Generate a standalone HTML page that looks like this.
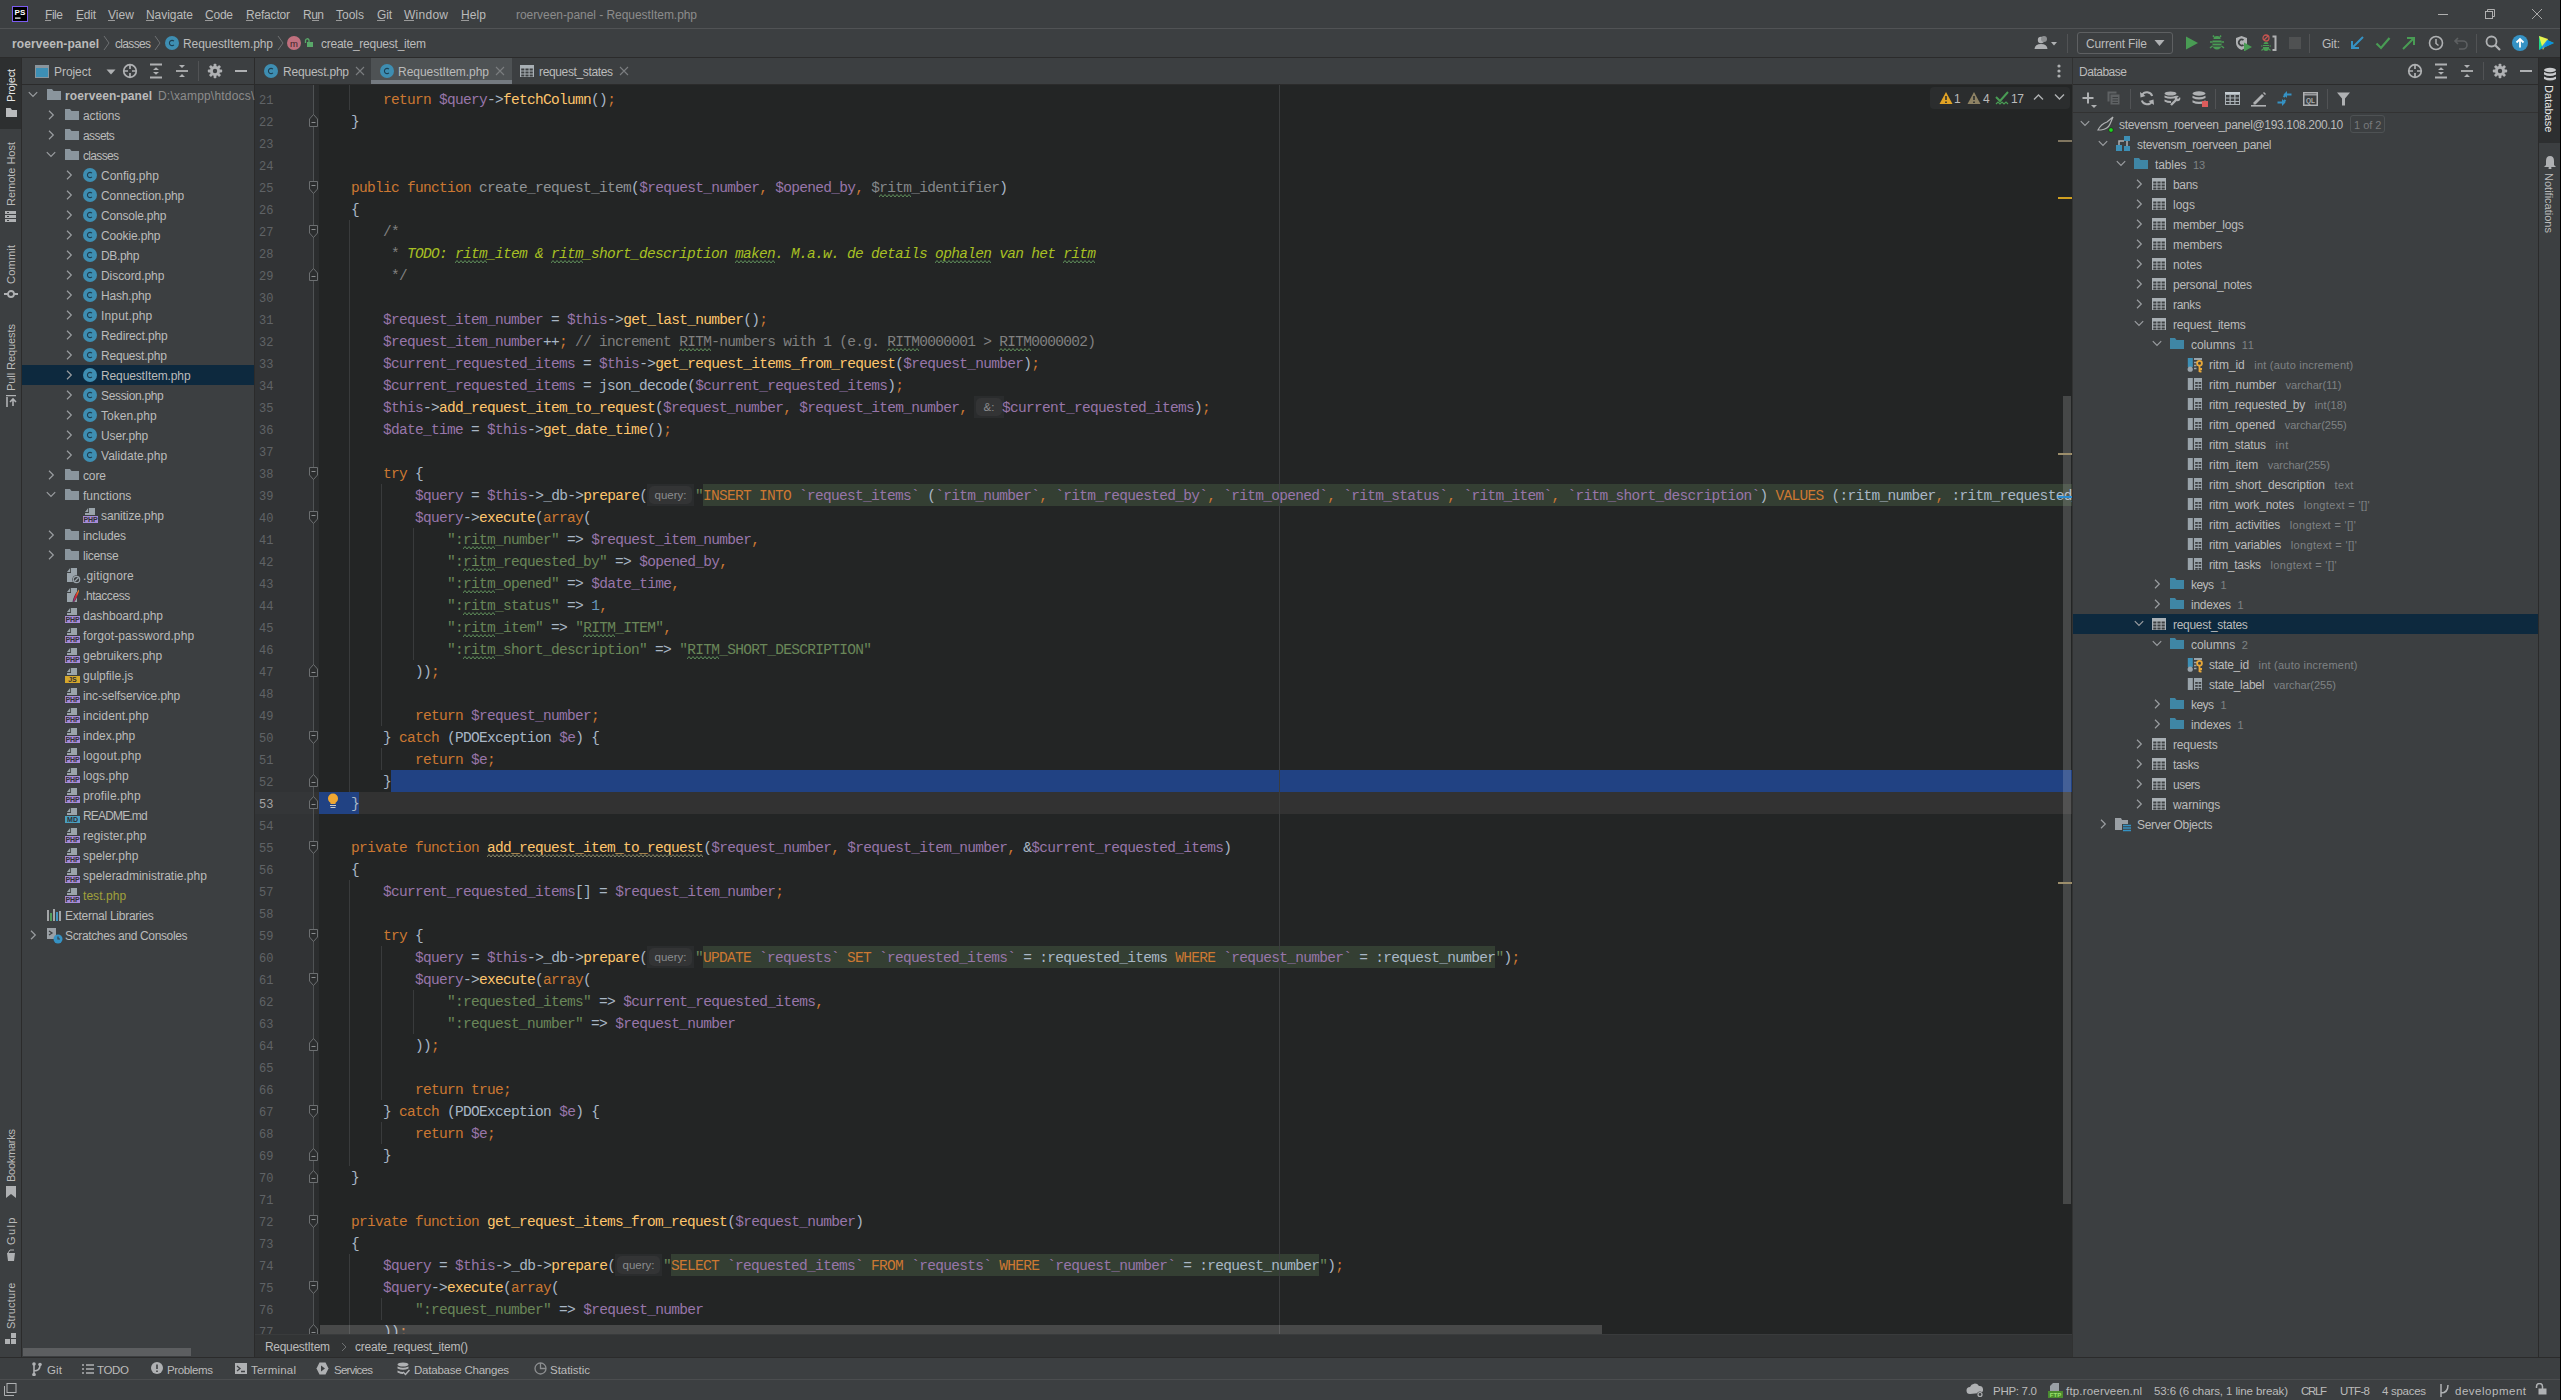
<!DOCTYPE html><html><head><meta charset="utf-8"><style>*{margin:0;padding:0}
html,body{width:2561px;height:1400px;overflow:hidden;background:#3c3f41}
.a{position:absolute;display:block}
.t{font-family:"Liberation Sans",sans-serif;white-space:nowrap}
.m{font-family:"Liberation Mono",monospace;font-size:14.5px;letter-spacing:-0.7px;white-space:pre}
</style></head><body><div class="a" style="left:0px;top:0px;width:2561px;height:28px;background:#3c3f41;"></div>
<div class="a" style="left:0px;top:28px;width:2561px;height:1px;background:#515355;"></div>
<svg class="a" style="left:12px;top:6px;" width="16" height="16" viewBox="0 0 16 16"><rect x="0.5" y="0.5" width="15" height="15" fill="#000" stroke="#7b5cf0" stroke-width="1"/><text x="2.6" y="9" font-size="8" font-family="Liberation Sans" font-weight="bold" fill="#fff">PS</text><rect x="3" y="11.5" width="5.5" height="1.2" fill="#fff"/></svg>
<div class="a t" style="left:45px;top:1px;height:28px;line-height:28px;color:#bbbbbb;font-size:12px;letter-spacing:-0.448px;">File</div>
<div class="a t" style="left:76px;top:1px;height:28px;line-height:28px;color:#bbbbbb;font-size:12px;letter-spacing:-0.224px;">Edit</div>
<div class="a t" style="left:108px;top:1px;height:28px;line-height:28px;color:#bbbbbb;font-size:12px;letter-spacing:0.068px;">View</div>
<div class="a t" style="left:146px;top:1px;height:28px;line-height:28px;color:#bbbbbb;font-size:12px;letter-spacing:-0.051px;">Navigate</div>
<div class="a t" style="left:205px;top:1px;height:28px;line-height:28px;color:#bbbbbb;font-size:12px;letter-spacing:-0.229px;">Code</div>
<div class="a t" style="left:246px;top:1px;height:28px;line-height:28px;color:#bbbbbb;font-size:12px;letter-spacing:-0.192px;">Refactor</div>
<div class="a t" style="left:303px;top:1px;height:28px;line-height:28px;color:#bbbbbb;font-size:12px;letter-spacing:-0.508px;">Run</div>
<div class="a t" style="left:336px;top:1px;height:28px;line-height:28px;color:#bbbbbb;font-size:12px;letter-spacing:-0.004px;">Tools</div>
<div class="a t" style="left:377px;top:1px;height:28px;line-height:28px;color:#bbbbbb;font-size:12px;letter-spacing:-0.164px;">Git</div>
<div class="a t" style="left:404px;top:1px;height:28px;line-height:28px;color:#bbbbbb;font-size:12px;letter-spacing:0.263px;">Window</div>
<div class="a t" style="left:461px;top:1px;height:28px;line-height:28px;color:#bbbbbb;font-size:12px;letter-spacing:0.104px;">Help</div>
<div class="a" style="left:45px;top:20px;width:6px;height:1px;background:#9a9a9a;"></div>
<div class="a" style="left:76px;top:20px;width:6px;height:1px;background:#9a9a9a;"></div>
<div class="a" style="left:108px;top:20px;width:7px;height:1px;background:#9a9a9a;"></div>
<div class="a" style="left:146px;top:20px;width:8px;height:1px;background:#9a9a9a;"></div>
<div class="a" style="left:205px;top:20px;width:8px;height:1px;background:#9a9a9a;"></div>
<div class="a" style="left:246px;top:20px;width:7px;height:1px;background:#9a9a9a;"></div>
<div class="a" style="left:312px;top:20px;width:7px;height:1px;background:#9a9a9a;"></div>
<div class="a" style="left:336px;top:20px;width:6px;height:1px;background:#9a9a9a;"></div>
<div class="a" style="left:377px;top:20px;width:8px;height:1px;background:#9a9a9a;"></div>
<div class="a" style="left:404px;top:20px;width:10px;height:1px;background:#9a9a9a;"></div>
<div class="a" style="left:461px;top:20px;width:8px;height:1px;background:#9a9a9a;"></div>
<div class="a t" style="left:516px;top:1px;height:28px;line-height:28px;color:#8c8c8c;font-size:12px;letter-spacing:-0.056px;">roerveen-panel - RequestItem.php</div>
<div class="a" style="left:2438px;top:14px;width:10px;height:1px;background:#b0b0b0;"></div>
<svg class="a" style="left:2485px;top:9px;" width="11" height="11" viewBox="0 0 11 11"><rect x="0.5" y="2.5" width="7" height="7" fill="none" stroke="#b0b0b0"/><path d="M2.5 2.5 V0.5 H9.5 V7.5 H7.5" fill="none" stroke="#b0b0b0"/></svg>
<svg class="a" style="left:2531px;top:8px;" width="12" height="12" viewBox="0 0 12 12"><path d="M1 1 L11 11 M11 1 L1 11" stroke="#a8a8a8" stroke-width="1"/></svg>
<div class="a" style="left:0px;top:29px;width:2561px;height:28px;background:#3c3f41;"></div>
<div class="a" style="left:0px;top:57px;width:2561px;height:1px;background:#2b2b2b;"></div>
<div class="a t" style="left:12px;top:30px;height:28px;line-height:28px;color:#bbbbbb;font-size:12px;font-weight:bold;letter-spacing:0.076px;">roerveen-panel</div>
<svg class="a" style="left:103px;top:33px;" width="7" height="20" viewBox="0 0 7 20"><path d="M1 3 L6 10 L1 17" fill="none" stroke="#6e7072" stroke-width="1"/></svg>
<div class="a t" style="left:115px;top:30px;height:28px;line-height:28px;color:#bbbbbb;font-size:12px;letter-spacing:-0.669px;">classes</div>
<svg class="a" style="left:154px;top:33px;" width="7" height="20" viewBox="0 0 7 20"><path d="M1 3 L6 10 L1 17" fill="none" stroke="#6e7072" stroke-width="1"/></svg>
<svg class="a" style="left:164px;top:35px;" width="16" height="16" viewBox="0 0 16 16"><circle cx="8" cy="8" r="7" fill="#3e8eb2"/><path d="M9.9 6.2 A2.6 2.6 0 1 0 9.9 9.8" fill="none" stroke="#1d3f52" stroke-width="1.1"/></svg>
<div class="a t" style="left:183px;top:30px;height:28px;line-height:28px;color:#bbbbbb;font-size:12px;letter-spacing:-0.097px;">RequestItem.php</div>
<svg class="a" style="left:277px;top:33px;" width="7" height="20" viewBox="0 0 7 20"><path d="M1 3 L6 10 L1 17" fill="none" stroke="#6e7072" stroke-width="1"/></svg>
<svg class="a" style="left:286px;top:35px;" width="16" height="16" viewBox="0 0 16 16"><circle cx="8" cy="8" r="7" fill="#c0707e"/><text x="8" y="11.5" font-size="9.5" font-family="Liberation Sans" fill="#3a2328" text-anchor="middle">m</text></svg>
<svg class="a" style="left:304px;top:38px;" width="10" height="10" viewBox="0 0 10 10"><rect x="3" y="4" width="6" height="5" fill="#59a869"/><path d="M1.5 5 V2.5 A1.8 1.8 0 0 1 5 2 V4" fill="none" stroke="#59a869" stroke-width="1.3"/></svg>
<div class="a t" style="left:321px;top:30px;height:28px;line-height:28px;color:#bbbbbb;font-size:12px;letter-spacing:-0.243px;">create_request_item</div>
<svg class="a" style="left:2033px;top:35px;" width="26" height="16" viewBox="0 0 26 16"><circle cx="8" cy="5" r="3.2" fill="#afb1b3"/><path d="M1.5 14 Q2 9 8 9 Q14 9 14.5 14 Z" fill="#afb1b3"/><circle cx="11" cy="4" r="3" fill="#8c8e90"/><path d="M18 7 L21 10.5 L24 7 Z" fill="#afb1b3"/></svg>
<div class="a" style="left:2067px;top:34px;width:1px;height:19px;background:#515355;"></div>
<div class="a" style="left:2077px;top:32px;width:96px;height:22px;background:none;border:1px solid #5e6062;border-radius:3px;box-sizing:border-box;"></div>
<div class="a t" style="left:2086px;top:30px;height:28px;line-height:28px;color:#bbbbbb;font-size:12px;letter-spacing:-0.153px;">Current File</div>
<svg class="a" style="left:2154px;top:39px;" width="11" height="8" viewBox="0 0 11 8"><path d="M0.5 1 H10.5 L5.5 7 Z" fill="#afb1b3"/></svg>
<svg class="a" style="left:2184px;top:35px;" width="15" height="16" viewBox="0 0 15 16"><path d="M2 1.5 L14 8 L2 14.5 Z" fill="#499c54"/></svg>
<svg class="a" style="left:2209px;top:35px;" width="16" height="16" viewBox="0 0 16 16"><path d="M4.5 4 A3.5 3 0 0 1 11.5 4 Z" fill="#499c54"/><path d="M3.5 5.5 H12.5 V10 A4.5 4.5 0 0 1 3.5 10 Z" fill="#499c54"/><path d="M3.5 8 H12.5" stroke="#3c3f41" stroke-width="1.2"/><path d="M3.5 11 H12.5" stroke="#3c3f41" stroke-width="1.2"/><path d="M5 2 L4 0.5 M11 2 L12 0.5 M3.5 7 H1 M12.5 7 H15 M3.5 11 L1 13 M12.5 11 L15 13" stroke="#499c54" stroke-width="1.5"/></svg>
<svg class="a" style="left:2235px;top:35px;" width="18" height="16" viewBox="0 0 18 16"><path d="M1 3 L6.5 1 L12 3 V8 Q12 12.5 6.5 15 Q1 12.5 1 8 Z" fill="#afb1b3"/><path d="M8.5 5 A3 3 0 1 0 8.5 10" fill="none" stroke="#3c3f41" stroke-width="1.8"/><path d="M9 7.5 L17 12 L9 16.5 Z" fill="#499c54"/></svg>
<svg class="a" style="left:2261px;top:34px;" width="18" height="18" viewBox="0 0 18 18"><circle cx="5" cy="4" r="3" fill="none" stroke="#c75450" stroke-width="1.3"/><path d="M3 6 L7 2" stroke="#c75450" stroke-width="1.2"/><path d="M2.5 10 A2.5 2 0 0 1 7.5 10 Z" fill="#499c54"/><path d="M2 11 H8 V14 A3 3 0 0 1 2 14 Z" fill="#499c54"/><path d="M2 12.5 H8" stroke="#3c3f41"/><path d="M1.5 12 H0 M8.5 12 H10 M2 15 L0.5 16.5 M8 15 L9.5 16.5" stroke="#499c54" stroke-width="1.1"/><path d="M11.5 2.5 H14.5 V16 H11.5" fill="none" stroke="#afb1b3" stroke-width="2"/></svg>
<div class="a" style="left:2289px;top:37px;width:12px;height:12px;background:#4f5152;"></div>
<div class="a" style="left:2309px;top:34px;width:1px;height:19px;background:#515355;"></div>
<div class="a t" style="left:2322px;top:30px;height:28px;line-height:28px;color:#bbbbbb;font-size:12px;letter-spacing:-0.219px;">Git:</div>
<svg class="a" style="left:2349px;top:35px;" width="16" height="16" viewBox="0 0 16 16"><path d="M14 2 L3 13 M3 6 V13 H10" fill="none" stroke="#3592c4" stroke-width="2"/></svg>
<svg class="a" style="left:2375px;top:35px;" width="16" height="16" viewBox="0 0 16 16"><path d="M1.5 8.5 L6 13 L14.5 3" fill="none" stroke="#499c54" stroke-width="2.2"/></svg>
<svg class="a" style="left:2401px;top:35px;" width="16" height="16" viewBox="0 0 16 16"><path d="M2 14 L13 3 M6 3 H13 V10" fill="none" stroke="#499c54" stroke-width="2"/></svg>
<svg class="a" style="left:2428px;top:35px;" width="16" height="16" viewBox="0 0 16 16"><circle cx="8" cy="8" r="6.5" fill="none" stroke="#afb1b3" stroke-width="1.6"/><path d="M8 4 V8.5 L10.5 10.5" fill="none" stroke="#afb1b3" stroke-width="1.5"/></svg>
<svg class="a" style="left:2453px;top:35px;" width="16" height="16" viewBox="0 0 16 16"><path d="M5 3 L2 6 L5 9 M2 6 H10 A4 4 0 0 1 10 14 H6" fill="none" stroke="#5d6062" stroke-width="1.6"/></svg>
<div class="a" style="left:2476px;top:34px;width:1px;height:19px;background:#515355;"></div>
<svg class="a" style="left:2485px;top:35px;" width="16" height="16" viewBox="0 0 16 16"><circle cx="6.5" cy="6.5" r="5" fill="none" stroke="#afb1b3" stroke-width="1.8"/><path d="M10 10 L15 15" stroke="#afb1b3" stroke-width="2.2"/></svg>
<svg class="a" style="left:2512px;top:35px;" width="16" height="16" viewBox="0 0 16 16"><circle cx="8" cy="8" r="8" fill="#3592c4"/><path d="M8 12.5 V4 M4.5 7.5 L8 4 L11.5 7.5" fill="none" stroke="#fff" stroke-width="1.8"/></svg>
<svg class="a" style="left:2538px;top:34px;" width="18" height="18" viewBox="0 0 18 18"><path d="M1 2 L16 9 L1 16 Z" fill="#21d789"/><path d="M1 2 L10 5 L5 16 Z" fill="#fcf84a" opacity="0.9"/><path d="M1 16 L16 9 L9 6 Z" fill="#087cfa" opacity="0.8"/></svg>
<div class="a" style="left:0px;top:58px;width:21px;height:1299px;background:#3c3f41;"></div>
<div class="a" style="left:21px;top:58px;width:1px;height:1299px;background:#2b2b2b;"></div>
<div class="a" style="left:0px;top:58px;width:21px;height:71px;background:#2d2f30;"></div>
<div class="a t" style="left:3px;top:101.5px;width:36.5px;height:16px;line-height:16px;color:#e6e6e6;font-size:11px;transform-origin:0 0;transform:rotate(-90deg);letter-spacing:-0.208px">Project</div>
<svg class="a" style="left:6px;top:108px;" width="12" height="10" viewBox="0 0 12 10"><path d="M0 0 H4.5 L6 2 H11 V9 H0 Z" fill="#b9bbbd"/></svg>
<div class="a t" style="left:3px;top:205.5px;width:67.5px;height:16px;line-height:16px;color:#bbbbbb;font-size:11px;transform-origin:0 0;transform:rotate(-90deg);letter-spacing:-0.022px">Remote Host</div>
<svg class="a" style="left:5px;top:211px;" width="12" height="11" viewBox="0 0 12 11"><rect x="0" y="0" width="11" height="3" fill="#afb1b3"/><rect x="0" y="4" width="11" height="3" fill="#afb1b3"/><rect x="0" y="8" width="11" height="3" fill="#afb1b3"/><path d="M2 1.5 H4 M2 5.5 H4 M2 9.5 H4" stroke="#3c3f41"/></svg>
<div class="a t" style="left:3px;top:283.5px;width:42.5px;height:16px;line-height:16px;color:#bbbbbb;font-size:11px;transform-origin:0 0;transform:rotate(-90deg);letter-spacing:0.225px">Commit</div>
<svg class="a" style="left:4px;top:289px;" width="14" height="10" viewBox="0 0 14 10"><circle cx="7" cy="5" r="3" fill="none" stroke="#afb1b3" stroke-width="1.8"/><path d="M0 5 H4 M10 5 H14" stroke="#afb1b3" stroke-width="1.8"/></svg>
<div class="a t" style="left:3px;top:390.5px;width:70.5px;height:16px;line-height:16px;color:#bbbbbb;font-size:11px;transform-origin:0 0;transform:rotate(-90deg);letter-spacing:-0.076px">Pull Requests</div>
<svg class="a" style="left:5px;top:395px;" width="12" height="12" viewBox="0 0 12 12"><path d="M1 0.5 H11 M2 12 V2 M8 11 V4 M5 7 L8 4 L11 7" fill="none" stroke="#afb1b3" stroke-width="1.6"/></svg>
<div class="a t" style="left:3px;top:1182.0px;width:56.5px;height:16px;line-height:16px;color:#bbbbbb;font-size:11px;transform-origin:0 0;transform:rotate(-90deg);letter-spacing:-0.254px">Bookmarks</div>
<svg class="a" style="left:6px;top:1186px;" width="10" height="12" viewBox="0 0 10 12"><path d="M0 0 H10 V12 L5 8 L0 12 Z" fill="#afb1b3"/></svg>
<div class="a t" style="left:3px;top:1244.5px;width:31px;height:16px;line-height:16px;color:#bbbbbb;font-size:11px;transform-origin:0 0;transform:rotate(-90deg);letter-spacing:1.417px">Gulp</div>
<svg class="a" style="left:6px;top:1249px;" width="10" height="12" viewBox="0 0 10 12"><path d="M1 4 H9 L8 12 H2 Z" fill="#afb1b3"/><path d="M2 4 L4 1 H8" fill="none" stroke="#afb1b3"/></svg>
<div class="a t" style="left:3px;top:1329.0px;width:50.0px;height:16px;line-height:16px;color:#bbbbbb;font-size:11px;transform-origin:0 0;transform:rotate(-90deg);letter-spacing:0.230px">Structure</div>
<svg class="a" style="left:5px;top:1333px;" width="12" height="12" viewBox="0 0 12 12"><rect x="6" y="0" width="5" height="5" fill="#afb1b3"/><rect x="0" y="6" width="5" height="5" fill="#afb1b3"/><rect x="6" y="6" width="5" height="5" fill="#afb1b3"/></svg>
<div class="a" style="left:22px;top:58px;width:232px;height:1299px;background:#3c3f41;"></div>
<div class="a" style="left:22px;top:84px;width:232px;height:1px;background:#2b2b2b;"></div>
<div class="a" style="left:254px;top:58px;width:1px;height:1299px;background:#2b2b2b;"></div>
<svg class="a" style="left:35px;top:65px;" width="14" height="13" viewBox="0 0 14 13"><rect x="0" y="0" width="14" height="13" fill="#8a959d"/><rect x="1" y="3" width="12" height="9" fill="#3d8fb5"/></svg>
<div class="a t" style="left:54px;top:59px;height:26px;line-height:26px;color:#bbbbbb;font-size:12px;letter-spacing:-0.057px;">Project</div>
<svg class="a" style="left:106px;top:69px;" width="10" height="6" viewBox="0 0 10 6"><path d="M0.5 0.5 H9.5 L5 5.5 Z" fill="#afb1b3"/></svg>
<svg class="a" style="left:122px;top:63px;" width="16" height="16" viewBox="0 0 16 16"><circle cx="8" cy="8" r="6.3" fill="none" stroke="#afb1b3" stroke-width="1.7"/><path d="M8 1.5 V6 M8 10 V14.5 M1.5 8 H6 M10 8 H14.5" stroke="#afb1b3" stroke-width="1.7"/></svg>
<svg class="a" style="left:148px;top:63px;" width="16" height="16" viewBox="0 0 16 16"><path d="M2 1.5 H14 M2 14.5 H14" stroke="#afb1b3" stroke-width="1.8"/><path d="M5 7 L8 4.2 L11 7 Z M5 9 L8 11.8 L11 9 Z" fill="#afb1b3"/></svg>
<svg class="a" style="left:174px;top:63px;" width="16" height="16" viewBox="0 0 16 16"><path d="M2 8 H14" stroke="#afb1b3" stroke-width="1.8"/><path d="M5 2 L8 5 L11 2 Z M5 14 L8 11 L11 14 Z" fill="#afb1b3"/></svg>
<div class="a" style="left:198px;top:61px;width:1px;height:20px;background:#515355;"></div>
<svg class="a" style="left:207px;top:63px;" width="16" height="16" viewBox="0 0 16 16"><g fill="#afb1b3"><circle cx="8" cy="8" r="5"/><rect x="6.6" y="0.8" width="2.8" height="14.4" rx="0.8" transform="rotate(0 8 8)"/><rect x="6.6" y="0.8" width="2.8" height="14.4" rx="0.8" transform="rotate(45 8 8)"/><rect x="6.6" y="0.8" width="2.8" height="14.4" rx="0.8" transform="rotate(90 8 8)"/><rect x="6.6" y="0.8" width="2.8" height="14.4" rx="0.8" transform="rotate(135 8 8)"/></g><circle cx="8" cy="8" r="2.2" fill="#3c3f41"/></svg>
<div class="a" style="left:235px;top:70px;width:12px;height:2px;background:#afb1b3;"></div>
<svg class="a" style="left:28px;top:90px;" width="10" height="10" viewBox="0 0 10 10"><path d="M0.8 2.2 L5 6.5 L9.2 2.2" fill="none" stroke="#9a9da0" stroke-width="1.2"/></svg>
<svg class="a" style="left:46px;top:86px;" width="16" height="16" viewBox="0 0 16 16"><path d="M1 3 H6 L7.5 5 H15 V14 H1 Z" fill="#8a959d"/></svg>
<div class="a t" style="left:65px;top:86px;height:20px;line-height:20px;color:#bbbbbb;font-size:12px;font-weight:bold;letter-spacing:0.076px;">roerveen-panel</div>
<div class="a t" style="left:158px;top:86px;height:20px;line-height:20px;color:#8c8c8c;font-size:12px;letter-spacing:0.190px;">D:\xampp\htdocs\</div>
<svg class="a" style="left:46px;top:110px;" width="10" height="10" viewBox="0 0 10 10"><path d="M3 0.8 L7.3 5 L3 9.2" fill="none" stroke="#9a9da0" stroke-width="1.2"/></svg>
<svg class="a" style="left:64px;top:106px;" width="16" height="16" viewBox="0 0 16 16"><path d="M1 3 H6 L7.5 5 H15 V14 H1 Z" fill="#8a959d"/></svg>
<div class="a t" style="left:83px;top:106px;height:20px;line-height:20px;color:#bbbbbb;font-size:12px;letter-spacing:-0.118px;">actions</div>
<svg class="a" style="left:46px;top:130px;" width="10" height="10" viewBox="0 0 10 10"><path d="M3 0.8 L7.3 5 L3 9.2" fill="none" stroke="#9a9da0" stroke-width="1.2"/></svg>
<svg class="a" style="left:64px;top:126px;" width="16" height="16" viewBox="0 0 16 16"><path d="M1 3 H6 L7.5 5 H15 V14 H1 Z" fill="#8a959d"/></svg>
<div class="a t" style="left:83px;top:126px;height:20px;line-height:20px;color:#bbbbbb;font-size:12px;letter-spacing:-0.596px;">assets</div>
<svg class="a" style="left:46px;top:150px;" width="10" height="10" viewBox="0 0 10 10"><path d="M0.8 2.2 L5 6.5 L9.2 2.2" fill="none" stroke="#9a9da0" stroke-width="1.2"/></svg>
<svg class="a" style="left:64px;top:146px;" width="16" height="16" viewBox="0 0 16 16"><path d="M1 3 H6 L7.5 5 H15 V14 H1 Z" fill="#8a959d"/></svg>
<div class="a t" style="left:83px;top:146px;height:20px;line-height:20px;color:#bbbbbb;font-size:12px;letter-spacing:-0.657px;">classes</div>
<svg class="a" style="left:64px;top:170px;" width="10" height="10" viewBox="0 0 10 10"><path d="M3 0.8 L7.3 5 L3 9.2" fill="none" stroke="#9a9da0" stroke-width="1.2"/></svg>
<svg class="a" style="left:82px;top:167px;" width="16" height="16" viewBox="0 0 16 16"><circle cx="8" cy="8" r="7" fill="#3e8eb2"/><path d="M9.9 6.2 A2.6 2.6 0 1 0 9.9 9.8" fill="none" stroke="#1d3f52" stroke-width="1.1"/></svg>
<div class="a t" style="left:101px;top:166px;height:20px;line-height:20px;color:#bbbbbb;font-size:12px;letter-spacing:-0.022px;">Config.php</div>
<svg class="a" style="left:64px;top:190px;" width="10" height="10" viewBox="0 0 10 10"><path d="M3 0.8 L7.3 5 L3 9.2" fill="none" stroke="#9a9da0" stroke-width="1.2"/></svg>
<svg class="a" style="left:82px;top:187px;" width="16" height="16" viewBox="0 0 16 16"><circle cx="8" cy="8" r="7" fill="#3e8eb2"/><path d="M9.9 6.2 A2.6 2.6 0 1 0 9.9 9.8" fill="none" stroke="#1d3f52" stroke-width="1.1"/></svg>
<div class="a t" style="left:101px;top:186px;height:20px;line-height:20px;color:#bbbbbb;font-size:12px;letter-spacing:-0.059px;">Connection.php</div>
<svg class="a" style="left:64px;top:210px;" width="10" height="10" viewBox="0 0 10 10"><path d="M3 0.8 L7.3 5 L3 9.2" fill="none" stroke="#9a9da0" stroke-width="1.2"/></svg>
<svg class="a" style="left:82px;top:207px;" width="16" height="16" viewBox="0 0 16 16"><circle cx="8" cy="8" r="7" fill="#3e8eb2"/><path d="M9.9 6.2 A2.6 2.6 0 1 0 9.9 9.8" fill="none" stroke="#1d3f52" stroke-width="1.1"/></svg>
<div class="a t" style="left:101px;top:206px;height:20px;line-height:20px;color:#bbbbbb;font-size:12px;letter-spacing:-0.199px;">Console.php</div>
<svg class="a" style="left:64px;top:230px;" width="10" height="10" viewBox="0 0 10 10"><path d="M3 0.8 L7.3 5 L3 9.2" fill="none" stroke="#9a9da0" stroke-width="1.2"/></svg>
<svg class="a" style="left:82px;top:227px;" width="16" height="16" viewBox="0 0 16 16"><circle cx="8" cy="8" r="7" fill="#3e8eb2"/><path d="M9.9 6.2 A2.6 2.6 0 1 0 9.9 9.8" fill="none" stroke="#1d3f52" stroke-width="1.1"/></svg>
<div class="a t" style="left:101px;top:226px;height:20px;line-height:20px;color:#bbbbbb;font-size:12px;letter-spacing:-0.136px;">Cookie.php</div>
<svg class="a" style="left:64px;top:250px;" width="10" height="10" viewBox="0 0 10 10"><path d="M3 0.8 L7.3 5 L3 9.2" fill="none" stroke="#9a9da0" stroke-width="1.2"/></svg>
<svg class="a" style="left:82px;top:247px;" width="16" height="16" viewBox="0 0 16 16"><circle cx="8" cy="8" r="7" fill="#3e8eb2"/><path d="M9.9 6.2 A2.6 2.6 0 1 0 9.9 9.8" fill="none" stroke="#1d3f52" stroke-width="1.1"/></svg>
<div class="a t" style="left:101px;top:246px;height:20px;line-height:20px;color:#bbbbbb;font-size:12px;letter-spacing:-0.330px;">DB.php</div>
<svg class="a" style="left:64px;top:270px;" width="10" height="10" viewBox="0 0 10 10"><path d="M3 0.8 L7.3 5 L3 9.2" fill="none" stroke="#9a9da0" stroke-width="1.2"/></svg>
<svg class="a" style="left:82px;top:267px;" width="16" height="16" viewBox="0 0 16 16"><circle cx="8" cy="8" r="7" fill="#3e8eb2"/><path d="M9.9 6.2 A2.6 2.6 0 1 0 9.9 9.8" fill="none" stroke="#1d3f52" stroke-width="1.1"/></svg>
<div class="a t" style="left:101px;top:266px;height:20px;line-height:20px;color:#bbbbbb;font-size:12px;letter-spacing:-0.064px;">Discord.php</div>
<svg class="a" style="left:64px;top:290px;" width="10" height="10" viewBox="0 0 10 10"><path d="M3 0.8 L7.3 5 L3 9.2" fill="none" stroke="#9a9da0" stroke-width="1.2"/></svg>
<svg class="a" style="left:82px;top:287px;" width="16" height="16" viewBox="0 0 16 16"><circle cx="8" cy="8" r="7" fill="#3e8eb2"/><path d="M9.9 6.2 A2.6 2.6 0 1 0 9.9 9.8" fill="none" stroke="#1d3f52" stroke-width="1.1"/></svg>
<div class="a t" style="left:101px;top:286px;height:20px;line-height:20px;color:#bbbbbb;font-size:12px;letter-spacing:-0.181px;">Hash.php</div>
<svg class="a" style="left:64px;top:310px;" width="10" height="10" viewBox="0 0 10 10"><path d="M3 0.8 L7.3 5 L3 9.2" fill="none" stroke="#9a9da0" stroke-width="1.2"/></svg>
<svg class="a" style="left:82px;top:307px;" width="16" height="16" viewBox="0 0 16 16"><circle cx="8" cy="8" r="7" fill="#3e8eb2"/><path d="M9.9 6.2 A2.6 2.6 0 1 0 9.9 9.8" fill="none" stroke="#1d3f52" stroke-width="1.1"/></svg>
<div class="a t" style="left:101px;top:306px;height:20px;line-height:20px;color:#bbbbbb;font-size:12px;letter-spacing:0.151px;">Input.php</div>
<svg class="a" style="left:64px;top:330px;" width="10" height="10" viewBox="0 0 10 10"><path d="M3 0.8 L7.3 5 L3 9.2" fill="none" stroke="#9a9da0" stroke-width="1.2"/></svg>
<svg class="a" style="left:82px;top:327px;" width="16" height="16" viewBox="0 0 16 16"><circle cx="8" cy="8" r="7" fill="#3e8eb2"/><path d="M9.9 6.2 A2.6 2.6 0 1 0 9.9 9.8" fill="none" stroke="#1d3f52" stroke-width="1.1"/></svg>
<div class="a t" style="left:101px;top:326px;height:20px;line-height:20px;color:#bbbbbb;font-size:12px;letter-spacing:-0.125px;">Redirect.php</div>
<svg class="a" style="left:64px;top:350px;" width="10" height="10" viewBox="0 0 10 10"><path d="M3 0.8 L7.3 5 L3 9.2" fill="none" stroke="#9a9da0" stroke-width="1.2"/></svg>
<svg class="a" style="left:82px;top:347px;" width="16" height="16" viewBox="0 0 16 16"><circle cx="8" cy="8" r="7" fill="#3e8eb2"/><path d="M9.9 6.2 A2.6 2.6 0 1 0 9.9 9.8" fill="none" stroke="#1d3f52" stroke-width="1.1"/></svg>
<div class="a t" style="left:101px;top:346px;height:20px;line-height:20px;color:#bbbbbb;font-size:12px;letter-spacing:-0.209px;">Request.php</div>
<div class="a" style="left:22px;top:365px;width:232px;height:20px;background:#0d293e;"></div>
<svg class="a" style="left:64px;top:370px;" width="10" height="10" viewBox="0 0 10 10"><path d="M3 0.8 L7.3 5 L3 9.2" fill="none" stroke="#9a9da0" stroke-width="1.2"/></svg>
<svg class="a" style="left:82px;top:367px;" width="16" height="16" viewBox="0 0 16 16"><circle cx="8" cy="8" r="7" fill="#3e8eb2"/><path d="M9.9 6.2 A2.6 2.6 0 1 0 9.9 9.8" fill="none" stroke="#1d3f52" stroke-width="1.1"/></svg>
<div class="a t" style="left:101px;top:366px;height:20px;line-height:20px;color:#bbbbbb;font-size:12px;letter-spacing:-0.129px;">RequestItem.php</div>
<svg class="a" style="left:64px;top:390px;" width="10" height="10" viewBox="0 0 10 10"><path d="M3 0.8 L7.3 5 L3 9.2" fill="none" stroke="#9a9da0" stroke-width="1.2"/></svg>
<svg class="a" style="left:82px;top:387px;" width="16" height="16" viewBox="0 0 16 16"><circle cx="8" cy="8" r="7" fill="#3e8eb2"/><path d="M9.9 6.2 A2.6 2.6 0 1 0 9.9 9.8" fill="none" stroke="#1d3f52" stroke-width="1.1"/></svg>
<div class="a t" style="left:101px;top:386px;height:20px;line-height:20px;color:#bbbbbb;font-size:12px;letter-spacing:-0.331px;">Session.php</div>
<svg class="a" style="left:64px;top:410px;" width="10" height="10" viewBox="0 0 10 10"><path d="M3 0.8 L7.3 5 L3 9.2" fill="none" stroke="#9a9da0" stroke-width="1.2"/></svg>
<svg class="a" style="left:82px;top:407px;" width="16" height="16" viewBox="0 0 16 16"><circle cx="8" cy="8" r="7" fill="#3e8eb2"/><path d="M9.9 6.2 A2.6 2.6 0 1 0 9.9 9.8" fill="none" stroke="#1d3f52" stroke-width="1.1"/></svg>
<div class="a t" style="left:101px;top:406px;height:20px;line-height:20px;color:#bbbbbb;font-size:12px;letter-spacing:0.040px;">Token.php</div>
<svg class="a" style="left:64px;top:430px;" width="10" height="10" viewBox="0 0 10 10"><path d="M3 0.8 L7.3 5 L3 9.2" fill="none" stroke="#9a9da0" stroke-width="1.2"/></svg>
<svg class="a" style="left:82px;top:427px;" width="16" height="16" viewBox="0 0 16 16"><circle cx="8" cy="8" r="7" fill="#3e8eb2"/><path d="M9.9 6.2 A2.6 2.6 0 1 0 9.9 9.8" fill="none" stroke="#1d3f52" stroke-width="1.1"/></svg>
<div class="a t" style="left:101px;top:426px;height:20px;line-height:20px;color:#bbbbbb;font-size:12px;letter-spacing:-0.116px;">User.php</div>
<svg class="a" style="left:64px;top:450px;" width="10" height="10" viewBox="0 0 10 10"><path d="M3 0.8 L7.3 5 L3 9.2" fill="none" stroke="#9a9da0" stroke-width="1.2"/></svg>
<svg class="a" style="left:82px;top:447px;" width="16" height="16" viewBox="0 0 16 16"><circle cx="8" cy="8" r="7" fill="#3e8eb2"/><path d="M9.9 6.2 A2.6 2.6 0 1 0 9.9 9.8" fill="none" stroke="#1d3f52" stroke-width="1.1"/></svg>
<div class="a t" style="left:101px;top:446px;height:20px;line-height:20px;color:#bbbbbb;font-size:12px;letter-spacing:0.034px;">Validate.php</div>
<svg class="a" style="left:46px;top:470px;" width="10" height="10" viewBox="0 0 10 10"><path d="M3 0.8 L7.3 5 L3 9.2" fill="none" stroke="#9a9da0" stroke-width="1.2"/></svg>
<svg class="a" style="left:64px;top:466px;" width="16" height="16" viewBox="0 0 16 16"><path d="M1 3 H6 L7.5 5 H15 V14 H1 Z" fill="#8a959d"/></svg>
<div class="a t" style="left:83px;top:466px;height:20px;line-height:20px;color:#bbbbbb;font-size:12px;letter-spacing:-0.145px;">core</div>
<svg class="a" style="left:46px;top:490px;" width="10" height="10" viewBox="0 0 10 10"><path d="M0.8 2.2 L5 6.5 L9.2 2.2" fill="none" stroke="#9a9da0" stroke-width="1.2"/></svg>
<svg class="a" style="left:64px;top:486px;" width="16" height="16" viewBox="0 0 16 16"><path d="M1 3 H6 L7.5 5 H15 V14 H1 Z" fill="#8a959d"/></svg>
<div class="a t" style="left:83px;top:486px;height:20px;line-height:20px;color:#bbbbbb;font-size:12px;letter-spacing:0.041px;">functions</div>
<svg class="a" style="left:82px;top:507px;" width="17" height="17" viewBox="0 0 17 17"><path d="M7 1 H13 V8 H3 V6 H7 Z" fill="#9aa4ab"/><path d="M3 5 L6.2 1 V5 Z" fill="#9aa4ab"/><rect x="1" y="9" width="15" height="7" fill="#a58bd6"/><text x="8.5" y="15.3" font-size="7" font-family="Liberation Sans" font-weight="bold" fill="#2f2f33" text-anchor="middle" letter-spacing="-0.2">PHP</text></svg>
<div class="a t" style="left:101px;top:506px;height:20px;line-height:20px;color:#bbbbbb;font-size:12px;letter-spacing:-0.103px;">sanitize.php</div>
<svg class="a" style="left:46px;top:530px;" width="10" height="10" viewBox="0 0 10 10"><path d="M3 0.8 L7.3 5 L3 9.2" fill="none" stroke="#9a9da0" stroke-width="1.2"/></svg>
<svg class="a" style="left:64px;top:526px;" width="16" height="16" viewBox="0 0 16 16"><path d="M1 3 H6 L7.5 5 H15 V14 H1 Z" fill="#8a959d"/></svg>
<div class="a t" style="left:83px;top:526px;height:20px;line-height:20px;color:#bbbbbb;font-size:12px;letter-spacing:-0.131px;">includes</div>
<svg class="a" style="left:46px;top:550px;" width="10" height="10" viewBox="0 0 10 10"><path d="M3 0.8 L7.3 5 L3 9.2" fill="none" stroke="#9a9da0" stroke-width="1.2"/></svg>
<svg class="a" style="left:64px;top:546px;" width="16" height="16" viewBox="0 0 16 16"><path d="M1 3 H6 L7.5 5 H15 V14 H1 Z" fill="#8a959d"/></svg>
<div class="a t" style="left:83px;top:546px;height:20px;line-height:20px;color:#bbbbbb;font-size:12px;letter-spacing:-0.287px;">license</div>
<svg class="a" style="left:64px;top:567px;" width="17" height="17" viewBox="0 0 17 17"><path d="M7 1 H13 V15 H3 V6 H7 Z" fill="#9aa4ab"/><path d="M3 5 L6.2 1 V5 Z" fill="#9aa4ab"/><circle cx="12.5" cy="12.5" r="4.3" fill="#3c3f41"/><circle cx="12.5" cy="12.5" r="3.2" fill="none" stroke="#9aa4ab" stroke-width="1.2"/><path d="M10.5 14.5 L14.5 10.5" stroke="#9aa4ab" stroke-width="1.2"/></svg>
<div class="a t" style="left:83px;top:566px;height:20px;line-height:20px;color:#bbbbbb;font-size:12px;letter-spacing:0.158px;">.gitignore</div>
<svg class="a" style="left:64px;top:587px;" width="17" height="17" viewBox="0 0 17 17"><defs><linearGradient id="fe" x1="1" y1="0" x2="0" y2="1"><stop offset="0" stop-color="#f5a623"/><stop offset="0.5" stop-color="#e0252f"/><stop offset="1" stop-color="#8e2a8e"/></linearGradient></defs><path d="M7 1 H13 V15 H3 V6 H7 Z" fill="#9aa4ab"/><path d="M3 5 L6.2 1 V5 Z" fill="#9aa4ab"/><path d="M15.5 2 Q16 5 11 14 Q9.5 16 8.5 16 Q8.5 12 12 6 Q14 3 15.5 2 Z" fill="#3c3f41"/><path d="M15 2.5 Q15.5 5 10.8 13.5 Q9.8 15.2 9.2 15.2 Q9.3 12 12.3 6.5 Q13.8 3.8 15 2.5 Z" fill="url(#fe)"/></svg>
<div class="a t" style="left:83px;top:586px;height:20px;line-height:20px;color:#bbbbbb;font-size:12px;letter-spacing:-0.429px;">.htaccess</div>
<svg class="a" style="left:64px;top:607px;" width="17" height="17" viewBox="0 0 17 17"><path d="M7 1 H13 V8 H3 V6 H7 Z" fill="#9aa4ab"/><path d="M3 5 L6.2 1 V5 Z" fill="#9aa4ab"/><rect x="1" y="9" width="15" height="7" fill="#a58bd6"/><text x="8.5" y="15.3" font-size="7" font-family="Liberation Sans" font-weight="bold" fill="#2f2f33" text-anchor="middle" letter-spacing="-0.2">PHP</text></svg>
<div class="a t" style="left:83px;top:606px;height:20px;line-height:20px;color:#bbbbbb;font-size:12px;letter-spacing:-0.004px;">dashboard.php</div>
<svg class="a" style="left:64px;top:627px;" width="17" height="17" viewBox="0 0 17 17"><path d="M7 1 H13 V8 H3 V6 H7 Z" fill="#9aa4ab"/><path d="M3 5 L6.2 1 V5 Z" fill="#9aa4ab"/><rect x="1" y="9" width="15" height="7" fill="#a58bd6"/><text x="8.5" y="15.3" font-size="7" font-family="Liberation Sans" font-weight="bold" fill="#2f2f33" text-anchor="middle" letter-spacing="-0.2">PHP</text></svg>
<div class="a t" style="left:83px;top:626px;height:20px;line-height:20px;color:#bbbbbb;font-size:12px;letter-spacing:0.093px;">forgot-password.php</div>
<svg class="a" style="left:64px;top:647px;" width="17" height="17" viewBox="0 0 17 17"><path d="M7 1 H13 V8 H3 V6 H7 Z" fill="#9aa4ab"/><path d="M3 5 L6.2 1 V5 Z" fill="#9aa4ab"/><rect x="1" y="9" width="15" height="7" fill="#a58bd6"/><text x="8.5" y="15.3" font-size="7" font-family="Liberation Sans" font-weight="bold" fill="#2f2f33" text-anchor="middle" letter-spacing="-0.2">PHP</text></svg>
<div class="a t" style="left:83px;top:646px;height:20px;line-height:20px;color:#bbbbbb;font-size:12px;letter-spacing:-0.015px;">gebruikers.php</div>
<svg class="a" style="left:64px;top:667px;" width="17" height="17" viewBox="0 0 17 17"><path d="M7 1 H13 V8 H3 V6 H7 Z" fill="#9aa4ab"/><path d="M3 5 L6.2 1 V5 Z" fill="#9aa4ab"/><rect x="1" y="9" width="15" height="7" fill="#d4a72c"/><text x="8.5" y="15.3" font-size="7" font-family="Liberation Sans" font-weight="bold" fill="#2f2f33" text-anchor="middle">JS</text></svg>
<div class="a t" style="left:83px;top:666px;height:20px;line-height:20px;color:#bbbbbb;font-size:12px;letter-spacing:0.020px;">gulpfile.js</div>
<svg class="a" style="left:64px;top:687px;" width="17" height="17" viewBox="0 0 17 17"><path d="M7 1 H13 V8 H3 V6 H7 Z" fill="#9aa4ab"/><path d="M3 5 L6.2 1 V5 Z" fill="#9aa4ab"/><rect x="1" y="9" width="15" height="7" fill="#a58bd6"/><text x="8.5" y="15.3" font-size="7" font-family="Liberation Sans" font-weight="bold" fill="#2f2f33" text-anchor="middle" letter-spacing="-0.2">PHP</text></svg>
<div class="a t" style="left:83px;top:686px;height:20px;line-height:20px;color:#bbbbbb;font-size:12px;letter-spacing:-0.123px;">inc-selfservice.php</div>
<svg class="a" style="left:64px;top:707px;" width="17" height="17" viewBox="0 0 17 17"><path d="M7 1 H13 V8 H3 V6 H7 Z" fill="#9aa4ab"/><path d="M3 5 L6.2 1 V5 Z" fill="#9aa4ab"/><rect x="1" y="9" width="15" height="7" fill="#a58bd6"/><text x="8.5" y="15.3" font-size="7" font-family="Liberation Sans" font-weight="bold" fill="#2f2f33" text-anchor="middle" letter-spacing="-0.2">PHP</text></svg>
<div class="a t" style="left:83px;top:706px;height:20px;line-height:20px;color:#bbbbbb;font-size:12px;letter-spacing:0.091px;">incident.php</div>
<svg class="a" style="left:64px;top:727px;" width="17" height="17" viewBox="0 0 17 17"><path d="M7 1 H13 V8 H3 V6 H7 Z" fill="#9aa4ab"/><path d="M3 5 L6.2 1 V5 Z" fill="#9aa4ab"/><rect x="1" y="9" width="15" height="7" fill="#a58bd6"/><text x="8.5" y="15.3" font-size="7" font-family="Liberation Sans" font-weight="bold" fill="#2f2f33" text-anchor="middle" letter-spacing="-0.2">PHP</text></svg>
<div class="a t" style="left:83px;top:726px;height:20px;line-height:20px;color:#bbbbbb;font-size:12px;letter-spacing:0.019px;">index.php</div>
<svg class="a" style="left:64px;top:747px;" width="17" height="17" viewBox="0 0 17 17"><path d="M7 1 H13 V8 H3 V6 H7 Z" fill="#9aa4ab"/><path d="M3 5 L6.2 1 V5 Z" fill="#9aa4ab"/><rect x="1" y="9" width="15" height="7" fill="#a58bd6"/><text x="8.5" y="15.3" font-size="7" font-family="Liberation Sans" font-weight="bold" fill="#2f2f33" text-anchor="middle" letter-spacing="-0.2">PHP</text></svg>
<div class="a t" style="left:83px;top:746px;height:20px;line-height:20px;color:#bbbbbb;font-size:12px;letter-spacing:0.242px;">logout.php</div>
<svg class="a" style="left:64px;top:767px;" width="17" height="17" viewBox="0 0 17 17"><path d="M7 1 H13 V8 H3 V6 H7 Z" fill="#9aa4ab"/><path d="M3 5 L6.2 1 V5 Z" fill="#9aa4ab"/><rect x="1" y="9" width="15" height="7" fill="#a58bd6"/><text x="8.5" y="15.3" font-size="7" font-family="Liberation Sans" font-weight="bold" fill="#2f2f33" text-anchor="middle" letter-spacing="-0.2">PHP</text></svg>
<div class="a t" style="left:83px;top:766px;height:20px;line-height:20px;color:#bbbbbb;font-size:12px;letter-spacing:0.036px;">logs.php</div>
<svg class="a" style="left:64px;top:787px;" width="17" height="17" viewBox="0 0 17 17"><path d="M7 1 H13 V8 H3 V6 H7 Z" fill="#9aa4ab"/><path d="M3 5 L6.2 1 V5 Z" fill="#9aa4ab"/><rect x="1" y="9" width="15" height="7" fill="#a58bd6"/><text x="8.5" y="15.3" font-size="7" font-family="Liberation Sans" font-weight="bold" fill="#2f2f33" text-anchor="middle" letter-spacing="-0.2">PHP</text></svg>
<div class="a t" style="left:83px;top:786px;height:20px;line-height:20px;color:#bbbbbb;font-size:12px;letter-spacing:0.153px;">profile.php</div>
<svg class="a" style="left:64px;top:807px;" width="17" height="17" viewBox="0 0 17 17"><path d="M7 1 H13 V8 H3 V6 H7 Z" fill="#9aa4ab"/><path d="M3 5 L6.2 1 V5 Z" fill="#9aa4ab"/><rect x="1" y="9" width="15" height="7" fill="#4a9ebf"/><text x="8.5" y="15.3" font-size="7" font-family="Liberation Sans" font-weight="bold" fill="#2f2f33" text-anchor="middle">MD</text></svg>
<div class="a t" style="left:83px;top:806px;height:20px;line-height:20px;color:#bbbbbb;font-size:12px;letter-spacing:-0.838px;">README.md</div>
<svg class="a" style="left:64px;top:827px;" width="17" height="17" viewBox="0 0 17 17"><path d="M7 1 H13 V8 H3 V6 H7 Z" fill="#9aa4ab"/><path d="M3 5 L6.2 1 V5 Z" fill="#9aa4ab"/><rect x="1" y="9" width="15" height="7" fill="#a58bd6"/><text x="8.5" y="15.3" font-size="7" font-family="Liberation Sans" font-weight="bold" fill="#2f2f33" text-anchor="middle" letter-spacing="-0.2">PHP</text></svg>
<div class="a t" style="left:83px;top:826px;height:20px;line-height:20px;color:#bbbbbb;font-size:12px;letter-spacing:0.074px;">register.php</div>
<svg class="a" style="left:64px;top:847px;" width="17" height="17" viewBox="0 0 17 17"><path d="M7 1 H13 V8 H3 V6 H7 Z" fill="#9aa4ab"/><path d="M3 5 L6.2 1 V5 Z" fill="#9aa4ab"/><rect x="1" y="9" width="15" height="7" fill="#a58bd6"/><text x="8.5" y="15.3" font-size="7" font-family="Liberation Sans" font-weight="bold" fill="#2f2f33" text-anchor="middle" letter-spacing="-0.2">PHP</text></svg>
<div class="a t" style="left:83px;top:846px;height:20px;line-height:20px;color:#bbbbbb;font-size:12px;letter-spacing:-0.000px;">speler.php</div>
<svg class="a" style="left:64px;top:867px;" width="17" height="17" viewBox="0 0 17 17"><path d="M7 1 H13 V8 H3 V6 H7 Z" fill="#9aa4ab"/><path d="M3 5 L6.2 1 V5 Z" fill="#9aa4ab"/><rect x="1" y="9" width="15" height="7" fill="#a58bd6"/><text x="8.5" y="15.3" font-size="7" font-family="Liberation Sans" font-weight="bold" fill="#2f2f33" text-anchor="middle" letter-spacing="-0.2">PHP</text></svg>
<div class="a t" style="left:83px;top:866px;height:20px;line-height:20px;color:#bbbbbb;font-size:12px;letter-spacing:-0.012px;">speleradministratie.php</div>
<svg class="a" style="left:64px;top:887px;" width="17" height="17" viewBox="0 0 17 17"><path d="M7 1 H13 V8 H3 V6 H7 Z" fill="#9aa4ab"/><path d="M3 5 L6.2 1 V5 Z" fill="#9aa4ab"/><rect x="1" y="9" width="15" height="7" fill="#a58bd6"/><text x="8.5" y="15.3" font-size="7" font-family="Liberation Sans" font-weight="bold" fill="#2f2f33" text-anchor="middle" letter-spacing="-0.2">PHP</text></svg>
<div class="a t" style="left:83px;top:886px;height:20px;line-height:20px;color:#a1a13b;font-size:12px;letter-spacing:0.053px;">test.php</div>
<svg class="a" style="left:46px;top:907px;" width="16" height="16" viewBox="0 0 16 16"><path d="M2 3 V14 M5 6 V14 M8 2 V14 M11 5 V14 M14 4 V14" stroke="#afb1b3" stroke-width="1.8"/><path d="M5 6 V14" stroke="#499c54" stroke-width="1.8"/><path d="M11 5 V14" stroke="#3592c4" stroke-width="1.8"/></svg>
<div class="a t" style="left:65px;top:906px;height:20px;line-height:20px;color:#bbbbbb;font-size:12px;letter-spacing:-0.266px;">External Libraries</div>
<svg class="a" style="left:28px;top:930px;" width="10" height="10" viewBox="0 0 10 10"><path d="M3 0.8 L7.3 5 L3 9.2" fill="none" stroke="#9a9da0" stroke-width="1.2"/></svg>
<svg class="a" style="left:46px;top:927px;" width="17" height="17" viewBox="0 0 17 17"><path d="M1 1 H10 V12 H1 Z" fill="#9aa0a5"/><path d="M3 4 L6 6 L3 8" fill="none" stroke="#3c3f41" stroke-width="1.3"/><circle cx="12" cy="12" r="4.5" fill="#3592c4"/><path d="M12 9.5 V12 H14" fill="none" stroke="#3c3f41" stroke-width="1.2"/></svg>
<div class="a t" style="left:65px;top:926px;height:20px;line-height:20px;color:#bbbbbb;font-size:12px;letter-spacing:-0.359px;">Scratches and Consoles</div>
<div class="a" style="left:23px;top:1348px;width:168px;height:8px;background:#5c5e60;"></div>
<div class="a" style="left:255px;top:58px;width:1817px;height:26px;background:#3c3f41;"></div>
<div class="a" style="left:255px;top:84px;width:1817px;height:1px;background:#2b2b2b;"></div>
<div class="a" style="left:371px;top:58px;width:141px;height:26px;background:#4e5254;"></div>
<div class="a" style="left:371px;top:80px;width:141px;height:4px;background:#747a80;"></div>
<svg class="a" style="left:263px;top:63px;" width="16" height="16" viewBox="0 0 16 16"><circle cx="8" cy="8" r="7" fill="#3e8eb2"/><path d="M9.9 6.2 A2.6 2.6 0 1 0 9.9 9.8" fill="none" stroke="#1d3f52" stroke-width="1.1"/></svg>
<div class="a t" style="left:283px;top:59px;height:26px;line-height:26px;color:#bbbbbb;font-size:12px;letter-spacing:-0.203px;">Request.php</div>
<svg class="a" style="left:355px;top:66px;" width="10" height="10" viewBox="0 0 10 10"><path d="M1 1 L9 9 M9 1 L1 9" stroke="#7b7e80" stroke-width="1.1"/></svg>
<svg class="a" style="left:379px;top:63px;" width="16" height="16" viewBox="0 0 16 16"><circle cx="8" cy="8" r="7" fill="#3e8eb2"/><path d="M9.9 6.2 A2.6 2.6 0 1 0 9.9 9.8" fill="none" stroke="#1d3f52" stroke-width="1.1"/></svg>
<div class="a t" style="left:398px;top:59px;height:26px;line-height:26px;color:#bbbbbb;font-size:12px;letter-spacing:-0.026px;">RequestItem.php</div>
<svg class="a" style="left:495px;top:66px;" width="10" height="10" viewBox="0 0 10 10"><path d="M1 1 L9 9 M9 1 L1 9" stroke="#7b7e80" stroke-width="1.1"/></svg>
<svg class="a" style="left:519px;top:63px;" width="16" height="16" viewBox="0 0 16 16"><rect x="1" y="2" width="14" height="12" fill="#a9b0b5"/><g fill="#3c3f41"><rect x="2.2" y="5.5" width="3.2" height="2"/><rect x="6.4" y="5.5" width="3.2" height="2"/><rect x="10.6" y="5.5" width="3.2" height="2"/><rect x="2.2" y="8.5" width="3.2" height="2"/><rect x="6.4" y="8.5" width="3.2" height="2"/><rect x="10.6" y="8.5" width="3.2" height="2"/><rect x="2.2" y="11.5" width="3.2" height="2"/><rect x="6.4" y="11.5" width="3.2" height="2"/><rect x="10.6" y="11.5" width="3.2" height="2"/></g></svg>
<div class="a t" style="left:539px;top:59px;height:26px;line-height:26px;color:#bbbbbb;font-size:12px;letter-spacing:-0.361px;">request_states</div>
<svg class="a" style="left:619px;top:66px;" width="10" height="10" viewBox="0 0 10 10"><path d="M1 1 L9 9 M9 1 L1 9" stroke="#7b7e80" stroke-width="1.1"/></svg>
<svg class="a" style="left:2056px;top:63px;" width="6" height="16" viewBox="0 0 6 16"><circle cx="3" cy="3" r="1.6" fill="#afb1b3"/><circle cx="3" cy="8" r="1.6" fill="#afb1b3"/><circle cx="3" cy="13" r="1.6" fill="#afb1b3"/></svg>
<div class="a" style="left:255px;top:85px;width:1817px;height:1249px;background:#232525;"></div>
<div class="a" style="left:255px;top:85px;width:59px;height:1249px;background:#313335;"></div>
<div class="a" style="left:314px;top:85px;width:5px;height:1249px;background:#2b2d2e;"></div>
<div class="a" style="left:255px;top:792px;width:59px;height:22px;background:#343638;"></div>
<div class="a" style="left:314px;top:792px;width:1758px;height:22px;background:#323232;"></div>
<div class="a" style="left:319px;top:792px;width:40px;height:22px;background:#214283;"></div>
<div class="a" style="left:391px;top:770px;width:1681px;height:22px;background:#214283;"></div>
<div class="a" style="left:255px;top:85px;width:1817px;height:1249px;overflow:hidden">
<div class="a m" style="left:0px;top:-17px;width:18.5px;height:22px;line-height:22px;text-align:right;color:#606366;font-size:12px;letter-spacing:0">20</div>
<div class="a m" style="left:0px;top:5px;width:18.5px;height:22px;line-height:22px;text-align:right;color:#606366;font-size:12px;letter-spacing:0">21</div>
<div class="a m" style="left:0px;top:27px;width:18.5px;height:22px;line-height:22px;text-align:right;color:#606366;font-size:12px;letter-spacing:0">22</div>
<div class="a m" style="left:0px;top:49px;width:18.5px;height:22px;line-height:22px;text-align:right;color:#606366;font-size:12px;letter-spacing:0">23</div>
<div class="a m" style="left:0px;top:71px;width:18.5px;height:22px;line-height:22px;text-align:right;color:#606366;font-size:12px;letter-spacing:0">24</div>
<div class="a m" style="left:0px;top:93px;width:18.5px;height:22px;line-height:22px;text-align:right;color:#606366;font-size:12px;letter-spacing:0">25</div>
<div class="a m" style="left:0px;top:115px;width:18.5px;height:22px;line-height:22px;text-align:right;color:#606366;font-size:12px;letter-spacing:0">26</div>
<div class="a m" style="left:0px;top:137px;width:18.5px;height:22px;line-height:22px;text-align:right;color:#606366;font-size:12px;letter-spacing:0">27</div>
<div class="a m" style="left:0px;top:159px;width:18.5px;height:22px;line-height:22px;text-align:right;color:#606366;font-size:12px;letter-spacing:0">28</div>
<div class="a m" style="left:0px;top:181px;width:18.5px;height:22px;line-height:22px;text-align:right;color:#606366;font-size:12px;letter-spacing:0">29</div>
<div class="a m" style="left:0px;top:203px;width:18.5px;height:22px;line-height:22px;text-align:right;color:#606366;font-size:12px;letter-spacing:0">30</div>
<div class="a m" style="left:0px;top:225px;width:18.5px;height:22px;line-height:22px;text-align:right;color:#606366;font-size:12px;letter-spacing:0">31</div>
<div class="a m" style="left:0px;top:247px;width:18.5px;height:22px;line-height:22px;text-align:right;color:#606366;font-size:12px;letter-spacing:0">32</div>
<div class="a m" style="left:0px;top:269px;width:18.5px;height:22px;line-height:22px;text-align:right;color:#606366;font-size:12px;letter-spacing:0">33</div>
<div class="a m" style="left:0px;top:291px;width:18.5px;height:22px;line-height:22px;text-align:right;color:#606366;font-size:12px;letter-spacing:0">34</div>
<div class="a m" style="left:0px;top:313px;width:18.5px;height:22px;line-height:22px;text-align:right;color:#606366;font-size:12px;letter-spacing:0">35</div>
<div class="a m" style="left:0px;top:335px;width:18.5px;height:22px;line-height:22px;text-align:right;color:#606366;font-size:12px;letter-spacing:0">36</div>
<div class="a m" style="left:0px;top:357px;width:18.5px;height:22px;line-height:22px;text-align:right;color:#606366;font-size:12px;letter-spacing:0">37</div>
<div class="a m" style="left:0px;top:379px;width:18.5px;height:22px;line-height:22px;text-align:right;color:#606366;font-size:12px;letter-spacing:0">38</div>
<div class="a m" style="left:0px;top:401px;width:18.5px;height:22px;line-height:22px;text-align:right;color:#606366;font-size:12px;letter-spacing:0">39</div>
<div class="a m" style="left:0px;top:423px;width:18.5px;height:22px;line-height:22px;text-align:right;color:#606366;font-size:12px;letter-spacing:0">40</div>
<div class="a m" style="left:0px;top:445px;width:18.5px;height:22px;line-height:22px;text-align:right;color:#606366;font-size:12px;letter-spacing:0">41</div>
<div class="a m" style="left:0px;top:467px;width:18.5px;height:22px;line-height:22px;text-align:right;color:#606366;font-size:12px;letter-spacing:0">42</div>
<div class="a m" style="left:0px;top:489px;width:18.5px;height:22px;line-height:22px;text-align:right;color:#606366;font-size:12px;letter-spacing:0">43</div>
<div class="a m" style="left:0px;top:511px;width:18.5px;height:22px;line-height:22px;text-align:right;color:#606366;font-size:12px;letter-spacing:0">44</div>
<div class="a m" style="left:0px;top:533px;width:18.5px;height:22px;line-height:22px;text-align:right;color:#606366;font-size:12px;letter-spacing:0">45</div>
<div class="a m" style="left:0px;top:555px;width:18.5px;height:22px;line-height:22px;text-align:right;color:#606366;font-size:12px;letter-spacing:0">46</div>
<div class="a m" style="left:0px;top:577px;width:18.5px;height:22px;line-height:22px;text-align:right;color:#606366;font-size:12px;letter-spacing:0">47</div>
<div class="a m" style="left:0px;top:599px;width:18.5px;height:22px;line-height:22px;text-align:right;color:#606366;font-size:12px;letter-spacing:0">48</div>
<div class="a m" style="left:0px;top:621px;width:18.5px;height:22px;line-height:22px;text-align:right;color:#606366;font-size:12px;letter-spacing:0">49</div>
<div class="a m" style="left:0px;top:643px;width:18.5px;height:22px;line-height:22px;text-align:right;color:#606366;font-size:12px;letter-spacing:0">50</div>
<div class="a m" style="left:0px;top:665px;width:18.5px;height:22px;line-height:22px;text-align:right;color:#606366;font-size:12px;letter-spacing:0">51</div>
<div class="a m" style="left:0px;top:687px;width:18.5px;height:22px;line-height:22px;text-align:right;color:#606366;font-size:12px;letter-spacing:0">52</div>
<div class="a m" style="left:0px;top:709px;width:18.5px;height:22px;line-height:22px;text-align:right;color:#a4a3a3;font-size:12px;letter-spacing:0">53</div>
<div class="a m" style="left:0px;top:731px;width:18.5px;height:22px;line-height:22px;text-align:right;color:#606366;font-size:12px;letter-spacing:0">54</div>
<div class="a m" style="left:0px;top:753px;width:18.5px;height:22px;line-height:22px;text-align:right;color:#606366;font-size:12px;letter-spacing:0">55</div>
<div class="a m" style="left:0px;top:775px;width:18.5px;height:22px;line-height:22px;text-align:right;color:#606366;font-size:12px;letter-spacing:0">56</div>
<div class="a m" style="left:0px;top:797px;width:18.5px;height:22px;line-height:22px;text-align:right;color:#606366;font-size:12px;letter-spacing:0">57</div>
<div class="a m" style="left:0px;top:819px;width:18.5px;height:22px;line-height:22px;text-align:right;color:#606366;font-size:12px;letter-spacing:0">58</div>
<div class="a m" style="left:0px;top:841px;width:18.5px;height:22px;line-height:22px;text-align:right;color:#606366;font-size:12px;letter-spacing:0">59</div>
<div class="a m" style="left:0px;top:863px;width:18.5px;height:22px;line-height:22px;text-align:right;color:#606366;font-size:12px;letter-spacing:0">60</div>
<div class="a m" style="left:0px;top:885px;width:18.5px;height:22px;line-height:22px;text-align:right;color:#606366;font-size:12px;letter-spacing:0">61</div>
<div class="a m" style="left:0px;top:907px;width:18.5px;height:22px;line-height:22px;text-align:right;color:#606366;font-size:12px;letter-spacing:0">62</div>
<div class="a m" style="left:0px;top:929px;width:18.5px;height:22px;line-height:22px;text-align:right;color:#606366;font-size:12px;letter-spacing:0">63</div>
<div class="a m" style="left:0px;top:951px;width:18.5px;height:22px;line-height:22px;text-align:right;color:#606366;font-size:12px;letter-spacing:0">64</div>
<div class="a m" style="left:0px;top:973px;width:18.5px;height:22px;line-height:22px;text-align:right;color:#606366;font-size:12px;letter-spacing:0">65</div>
<div class="a m" style="left:0px;top:995px;width:18.5px;height:22px;line-height:22px;text-align:right;color:#606366;font-size:12px;letter-spacing:0">66</div>
<div class="a m" style="left:0px;top:1017px;width:18.5px;height:22px;line-height:22px;text-align:right;color:#606366;font-size:12px;letter-spacing:0">67</div>
<div class="a m" style="left:0px;top:1039px;width:18.5px;height:22px;line-height:22px;text-align:right;color:#606366;font-size:12px;letter-spacing:0">68</div>
<div class="a m" style="left:0px;top:1061px;width:18.5px;height:22px;line-height:22px;text-align:right;color:#606366;font-size:12px;letter-spacing:0">69</div>
<div class="a m" style="left:0px;top:1083px;width:18.5px;height:22px;line-height:22px;text-align:right;color:#606366;font-size:12px;letter-spacing:0">70</div>
<div class="a m" style="left:0px;top:1105px;width:18.5px;height:22px;line-height:22px;text-align:right;color:#606366;font-size:12px;letter-spacing:0">71</div>
<div class="a m" style="left:0px;top:1127px;width:18.5px;height:22px;line-height:22px;text-align:right;color:#606366;font-size:12px;letter-spacing:0">72</div>
<div class="a m" style="left:0px;top:1149px;width:18.5px;height:22px;line-height:22px;text-align:right;color:#606366;font-size:12px;letter-spacing:0">73</div>
<div class="a m" style="left:0px;top:1171px;width:18.5px;height:22px;line-height:22px;text-align:right;color:#606366;font-size:12px;letter-spacing:0">74</div>
<div class="a m" style="left:0px;top:1193px;width:18.5px;height:22px;line-height:22px;text-align:right;color:#606366;font-size:12px;letter-spacing:0">75</div>
<div class="a m" style="left:0px;top:1215px;width:18.5px;height:22px;line-height:22px;text-align:right;color:#606366;font-size:12px;letter-spacing:0">76</div>
<div class="a m" style="left:0px;top:1237px;width:18.5px;height:22px;line-height:22px;text-align:right;color:#606366;font-size:12px;letter-spacing:0">77</div>
</div>
<div class="a" style="left:313px;top:85px;width:1px;height:1249px;background:#4f5254;"></div>
<svg class="a" style="left:309px;top:181px;" width="10" height="13" viewBox="0 0 10 13"><path d="M0.5 0.5 H8.5 V8 L4.5 12.5 L0.5 8 Z" fill="#2b2d2e" stroke="#6c6f71"/><path d="M2.5 4.5 H6.5" stroke="#8a8d8f"/></svg>
<svg class="a" style="left:309px;top:225px;" width="10" height="13" viewBox="0 0 10 13"><path d="M0.5 0.5 H8.5 V8 L4.5 12.5 L0.5 8 Z" fill="#2b2d2e" stroke="#6c6f71"/><path d="M2.5 4.5 H6.5" stroke="#8a8d8f"/></svg>
<svg class="a" style="left:309px;top:467px;" width="10" height="13" viewBox="0 0 10 13"><path d="M0.5 0.5 H8.5 V8 L4.5 12.5 L0.5 8 Z" fill="#2b2d2e" stroke="#6c6f71"/><path d="M2.5 4.5 H6.5" stroke="#8a8d8f"/></svg>
<svg class="a" style="left:309px;top:511px;" width="10" height="13" viewBox="0 0 10 13"><path d="M0.5 0.5 H8.5 V8 L4.5 12.5 L0.5 8 Z" fill="#2b2d2e" stroke="#6c6f71"/><path d="M2.5 4.5 H6.5" stroke="#8a8d8f"/></svg>
<svg class="a" style="left:309px;top:731px;" width="10" height="13" viewBox="0 0 10 13"><path d="M0.5 0.5 H8.5 V8 L4.5 12.5 L0.5 8 Z" fill="#2b2d2e" stroke="#6c6f71"/><path d="M2.5 4.5 H6.5" stroke="#8a8d8f"/></svg>
<svg class="a" style="left:309px;top:841px;" width="10" height="13" viewBox="0 0 10 13"><path d="M0.5 0.5 H8.5 V8 L4.5 12.5 L0.5 8 Z" fill="#2b2d2e" stroke="#6c6f71"/><path d="M2.5 4.5 H6.5" stroke="#8a8d8f"/></svg>
<svg class="a" style="left:309px;top:929px;" width="10" height="13" viewBox="0 0 10 13"><path d="M0.5 0.5 H8.5 V8 L4.5 12.5 L0.5 8 Z" fill="#2b2d2e" stroke="#6c6f71"/><path d="M2.5 4.5 H6.5" stroke="#8a8d8f"/></svg>
<svg class="a" style="left:309px;top:973px;" width="10" height="13" viewBox="0 0 10 13"><path d="M0.5 0.5 H8.5 V8 L4.5 12.5 L0.5 8 Z" fill="#2b2d2e" stroke="#6c6f71"/><path d="M2.5 4.5 H6.5" stroke="#8a8d8f"/></svg>
<svg class="a" style="left:309px;top:1105px;" width="10" height="13" viewBox="0 0 10 13"><path d="M0.5 0.5 H8.5 V8 L4.5 12.5 L0.5 8 Z" fill="#2b2d2e" stroke="#6c6f71"/><path d="M2.5 4.5 H6.5" stroke="#8a8d8f"/></svg>
<svg class="a" style="left:309px;top:1215px;" width="10" height="13" viewBox="0 0 10 13"><path d="M0.5 0.5 H8.5 V8 L4.5 12.5 L0.5 8 Z" fill="#2b2d2e" stroke="#6c6f71"/><path d="M2.5 4.5 H6.5" stroke="#8a8d8f"/></svg>
<svg class="a" style="left:309px;top:1281px;" width="10" height="13" viewBox="0 0 10 13"><path d="M0.5 0.5 H8.5 V8 L4.5 12.5 L0.5 8 Z" fill="#2b2d2e" stroke="#6c6f71"/><path d="M2.5 4.5 H6.5" stroke="#8a8d8f"/></svg>
<svg class="a" style="left:309px;top:114px;" width="10" height="13" viewBox="0 0 10 13"><path d="M0.5 12.5 H8.5 V5 L4.5 0.5 L0.5 5 Z" fill="#2b2d2e" stroke="#6c6f71"/><path d="M2.5 8.5 H6.5" stroke="#8a8d8f"/></svg>
<svg class="a" style="left:309px;top:268px;" width="10" height="13" viewBox="0 0 10 13"><path d="M0.5 12.5 H8.5 V5 L4.5 0.5 L0.5 5 Z" fill="#2b2d2e" stroke="#6c6f71"/><path d="M2.5 8.5 H6.5" stroke="#8a8d8f"/></svg>
<svg class="a" style="left:309px;top:664px;" width="10" height="13" viewBox="0 0 10 13"><path d="M0.5 12.5 H8.5 V5 L4.5 0.5 L0.5 5 Z" fill="#2b2d2e" stroke="#6c6f71"/><path d="M2.5 8.5 H6.5" stroke="#8a8d8f"/></svg>
<svg class="a" style="left:309px;top:774px;" width="10" height="13" viewBox="0 0 10 13"><path d="M0.5 12.5 H8.5 V5 L4.5 0.5 L0.5 5 Z" fill="#2b2d2e" stroke="#6c6f71"/><path d="M2.5 8.5 H6.5" stroke="#8a8d8f"/></svg>
<svg class="a" style="left:309px;top:796px;" width="10" height="13" viewBox="0 0 10 13"><path d="M0.5 12.5 H8.5 V5 L4.5 0.5 L0.5 5 Z" fill="#2b2d2e" stroke="#6c6f71"/><path d="M2.5 8.5 H6.5" stroke="#8a8d8f"/></svg>
<svg class="a" style="left:309px;top:1038px;" width="10" height="13" viewBox="0 0 10 13"><path d="M0.5 12.5 H8.5 V5 L4.5 0.5 L0.5 5 Z" fill="#2b2d2e" stroke="#6c6f71"/><path d="M2.5 8.5 H6.5" stroke="#8a8d8f"/></svg>
<svg class="a" style="left:309px;top:1148px;" width="10" height="13" viewBox="0 0 10 13"><path d="M0.5 12.5 H8.5 V5 L4.5 0.5 L0.5 5 Z" fill="#2b2d2e" stroke="#6c6f71"/><path d="M2.5 8.5 H6.5" stroke="#8a8d8f"/></svg>
<svg class="a" style="left:309px;top:1170px;" width="10" height="13" viewBox="0 0 10 13"><path d="M0.5 12.5 H8.5 V5 L4.5 0.5 L0.5 5 Z" fill="#2b2d2e" stroke="#6c6f71"/><path d="M2.5 8.5 H6.5" stroke="#8a8d8f"/></svg>
<svg class="a" style="left:309px;top:1324px;" width="10" height="13" viewBox="0 0 10 13"><path d="M0.5 12.5 H8.5 V5 L4.5 0.5 L0.5 5 Z" fill="#2b2d2e" stroke="#6c6f71"/><path d="M2.5 8.5 H6.5" stroke="#8a8d8f"/></svg>
<div class="a" style="left:349px;top:220px;width:1px;height:572px;background:#393b3c;"></div>
<div class="a" style="left:349px;top:880px;width:1px;height:286px;background:#393b3c;"></div>
<div class="a" style="left:381px;top:484px;width:1px;height:242px;background:#393b3c;"></div>
<div class="a" style="left:381px;top:748px;width:1px;height:22px;background:#393b3c;"></div>
<div class="a" style="left:381px;top:946px;width:1px;height:154px;background:#393b3c;"></div>
<div class="a" style="left:381px;top:1122px;width:1px;height:22px;background:#393b3c;"></div>
<div class="a" style="left:413px;top:528px;width:1px;height:132px;background:#393b3c;"></div>
<div class="a" style="left:413px;top:990px;width:1px;height:44px;background:#393b3c;"></div>
<div class="a" style="left:381px;top:1298px;width:1px;height:22px;background:#393b3c;"></div>
<div class="a" style="left:349px;top:1254px;width:1px;height:88px;background:#393b3c;"></div>
<div class="a" style="left:349px;top:85px;width:1px;height:25px;background:#393b3c;"></div>
<div class="a" style="left:319px;top:85px;width:1753px;height:1249px;overflow:hidden">
<div class="a m" style="left:0;top:3.5px;height:22px;line-height:22px;white-space:pre">        <span style="color:#cc7832;">return</span> <span style="color:#9876aa;">$query</span><span style="color:#a9b7c6;">-&gt;</span><span style="color:#ffc66d;">fetchColumn</span><span style="color:#a9b7c6;">(</span><span style="color:#a9b7c6;">)</span><span style="color:#cc7832;">;</span></div>
<div class="a m" style="left:0;top:25.5px;height:22px;line-height:22px;white-space:pre">    <span style="color:#a9b7c6;">}</span></div>
<div class="a m" style="left:0;top:91.5px;height:22px;line-height:22px;white-space:pre">    <span style="color:#cc7832;">public</span> <span style="color:#cc7832;">function</span> <span style="color:#8f9396;">create_request_item</span><span style="color:#a9b7c6;">(</span><span style="color:#9876aa;">$request_number</span><span style="color:#cc7832;">,</span> <span style="color:#9876aa;">$opened_by</span><span style="color:#cc7832;">,</span> <span style="color:#85888b;">$ritm_identifier</span><span style="color:#a9b7c6;">)</span></div>
<div class="a m" style="left:0;top:113.5px;height:22px;line-height:22px;white-space:pre">    <span style="color:#a9b7c6;">{</span></div>
<div class="a m" style="left:0;top:135.5px;height:22px;line-height:22px;white-space:pre"><span style="color:#808080;">        /*</span></div>
<div class="a m" style="left:0;top:157.5px;height:22px;line-height:22px;white-space:pre">         <span style="color:#808080;">* </span><span style="color:#a8c023;font-style:italic">TODO: ritm_item &amp; ritm_short_description maken. M.a.w. de details ophalen van het ritm</span></div>
<div class="a m" style="left:0;top:179.5px;height:22px;line-height:22px;white-space:pre"><span style="color:#808080;">         */</span></div>
<div class="a m" style="left:0;top:223.5px;height:22px;line-height:22px;white-space:pre">        <span style="color:#9876aa;">$request_item_number</span> <span style="color:#a9b7c6;">=</span> <span style="color:#9876aa;">$this</span><span style="color:#a9b7c6;">-&gt;</span><span style="color:#ffc66d;">get_last_number</span><span style="color:#a9b7c6;">(</span><span style="color:#a9b7c6;">)</span><span style="color:#cc7832;">;</span></div>
<div class="a m" style="left:0;top:245.5px;height:22px;line-height:22px;white-space:pre">        <span style="color:#9876aa;">$request_item_number</span><span style="color:#a9b7c6;">+</span><span style="color:#a9b7c6;">+</span><span style="color:#cc7832;">;</span> <span style="color:#808080;">// increment RITM-numbers with 1 (e.g. RITM0000001 &gt; RITM0000002)</span></div>
<div class="a m" style="left:0;top:267.5px;height:22px;line-height:22px;white-space:pre">        <span style="color:#9876aa;">$current_requested_items</span> <span style="color:#a9b7c6;">=</span> <span style="color:#9876aa;">$this</span><span style="color:#a9b7c6;">-&gt;</span><span style="color:#ffc66d;">get_request_items_from_request</span><span style="color:#a9b7c6;">(</span><span style="color:#9876aa;">$request_number</span><span style="color:#a9b7c6;">)</span><span style="color:#cc7832;">;</span></div>
<div class="a m" style="left:0;top:289.5px;height:22px;line-height:22px;white-space:pre">        <span style="color:#9876aa;">$current_requested_items</span> <span style="color:#a9b7c6;">=</span> <span style="color:#a9b7c6;">json_decode</span><span style="color:#a9b7c6;">(</span><span style="color:#9876aa;">$current_requested_items</span><span style="color:#a9b7c6;">)</span><span style="color:#cc7832;">;</span></div>
<div class="a m" style="left:0;top:311.5px;height:22px;line-height:22px;white-space:pre">        <span style="color:#9876aa;">$this</span><span style="color:#a9b7c6;">-&gt;</span><span style="color:#ffc66d;">add_request_item_to_request</span><span style="color:#a9b7c6;">(</span><span style="color:#9876aa;">$request_number</span><span style="color:#cc7832;">,</span> <span style="color:#9876aa;">$request_item_number</span><span style="color:#cc7832;">,</span> </div>
<div class="a" style="left:655px;top:311px;width:30px;height:22px;background:#2a2c2d"></div>
<div class="a t" style="left:657px;top:313px;width:26px;height:18px;line-height:18px;background:#333435;border-radius:5px;color:#8a8c8e;font-size:11.5px;text-align:center">&amp;:</div>
<div class="a m" style="left:683px;top:311.5px;height:22px;line-height:22px;white-space:pre"><span style="color:#9876aa;">$current_requested_items</span><span style="color:#a9b7c6;">)</span><span style="color:#cc7832;">;</span></div>
<div class="a m" style="left:0;top:333.5px;height:22px;line-height:22px;white-space:pre">        <span style="color:#9876aa;">$date_time</span> <span style="color:#a9b7c6;">=</span> <span style="color:#9876aa;">$this</span><span style="color:#a9b7c6;">-&gt;</span><span style="color:#ffc66d;">get_date_time</span><span style="color:#a9b7c6;">(</span><span style="color:#a9b7c6;">)</span><span style="color:#cc7832;">;</span></div>
<div class="a m" style="left:0;top:377.5px;height:22px;line-height:22px;white-space:pre">        <span style="color:#cc7832;">try</span> <span style="color:#a9b7c6;">{</span></div>
<div class="a m" style="left:0;top:399.5px;height:22px;line-height:22px;white-space:pre">            <span style="color:#9876aa;">$query</span> <span style="color:#a9b7c6;">=</span> <span style="color:#9876aa;">$this</span><span style="color:#a9b7c6;">-</span><span style="color:#a9b7c6;">&gt;</span><span style="color:#a9b7c6;">_db</span><span style="color:#a9b7c6;">-&gt;</span><span style="color:#ffc66d;">prepare</span><span style="color:#a9b7c6;">(</span></div>
<div class="a" style="left:328.0px;top:399px;width:47px;height:22px;background:#2a2c2d"></div>
<div class="a t" style="left:330.0px;top:401px;width:43px;height:18px;line-height:18px;background:#333435;border-radius:5px;color:#8a8c8e;font-size:11.5px;text-align:center">query:</div>
<div class="a" style="left:384.0px;top:399px;width:1920.0px;height:22px;background:#343f33"></div>
<div class="a m" style="left:376.0px;top:399.5px;height:22px;line-height:22px;white-space:pre"><span style="color:#6a8759">"</span><span style="color:#cc7832;">INSERT</span> <span style="color:#cc7832;">INTO</span> <span style="color:#9876aa;">`request_items`</span> <span style="color:#a9b7c6;">(</span><span style="color:#9876aa;">`ritm_number`</span><span style="color:#cc7832;">,</span> <span style="color:#9876aa;">`ritm_requested_by`</span><span style="color:#cc7832;">,</span> <span style="color:#9876aa;">`ritm_opened`</span><span style="color:#cc7832;">,</span> <span style="color:#9876aa;">`ritm_status`</span><span style="color:#cc7832;">,</span> <span style="color:#9876aa;">`ritm_item`</span><span style="color:#cc7832;">,</span> <span style="color:#9876aa;">`ritm_short_description`</span><span style="color:#a9b7c6;">)</span> <span style="color:#cc7832;">VALUES</span> <span style="color:#a9b7c6;">(:ritm_number</span><span style="color:#cc7832;">,</span> <span style="color:#a9b7c6;">:ritm_requested_by</span><span style="color:#cc7832;">,</span> <span style="color:#a9b7c6;">:ritm_opened</span><span style="color:#cc7832;">,</span> <span style="color:#a9b7c6;">:ritm_status</span><span style="color:#cc7832;">,</span> <span style="color:#a9b7c6;">:ritm_item</span><span style="color:#cc7832;">,</span> <span style="color:#a9b7c6;">:ritm_short_description)</span><span style="color:#6a8759">"</span><span style="color:#a9b7c6">)</span><span style="color:#cc7832">;</span></div>
<div class="a m" style="left:0;top:421.5px;height:22px;line-height:22px;white-space:pre">            <span style="color:#9876aa;">$query</span><span style="color:#a9b7c6;">-&gt;</span><span style="color:#ffc66d;">execute</span><span style="color:#a9b7c6;">(</span><span style="color:#cc7832;">array</span><span style="color:#a9b7c6;">(</span></div>
<div class="a m" style="left:0;top:443.5px;height:22px;line-height:22px;white-space:pre">                <span style="color:#6a8759;">&quot;:ritm_number&quot;</span> <span style="color:#a9b7c6;">=</span><span style="color:#a9b7c6;">&gt;</span> <span style="color:#9876aa;">$request_item_number</span><span style="color:#cc7832;">,</span></div>
<div class="a m" style="left:0;top:465.5px;height:22px;line-height:22px;white-space:pre">                <span style="color:#6a8759;">&quot;:ritm_requested_by&quot;</span> <span style="color:#a9b7c6;">=</span><span style="color:#a9b7c6;">&gt;</span> <span style="color:#9876aa;">$opened_by</span><span style="color:#cc7832;">,</span></div>
<div class="a m" style="left:0;top:487.5px;height:22px;line-height:22px;white-space:pre">                <span style="color:#6a8759;">&quot;:ritm_opened&quot;</span> <span style="color:#a9b7c6;">=</span><span style="color:#a9b7c6;">&gt;</span> <span style="color:#9876aa;">$date_time</span><span style="color:#cc7832;">,</span></div>
<div class="a m" style="left:0;top:509.5px;height:22px;line-height:22px;white-space:pre">                <span style="color:#6a8759;">&quot;:ritm_status&quot;</span> <span style="color:#a9b7c6;">=</span><span style="color:#a9b7c6;">&gt;</span> <span style="color:#6897bb;">1</span><span style="color:#cc7832;">,</span></div>
<div class="a m" style="left:0;top:531.5px;height:22px;line-height:22px;white-space:pre">                <span style="color:#6a8759;">&quot;:ritm_item&quot;</span> <span style="color:#a9b7c6;">=</span><span style="color:#a9b7c6;">&gt;</span> <span style="color:#6a8759;">&quot;RITM_ITEM&quot;</span><span style="color:#cc7832;">,</span></div>
<div class="a m" style="left:0;top:553.5px;height:22px;line-height:22px;white-space:pre">                <span style="color:#6a8759;">&quot;:ritm_short_description&quot;</span> <span style="color:#a9b7c6;">=</span><span style="color:#a9b7c6;">&gt;</span> <span style="color:#6a8759;">&quot;RITM_SHORT_DESCRIPTION&quot;</span></div>
<div class="a m" style="left:0;top:575.5px;height:22px;line-height:22px;white-space:pre">            <span style="color:#a9b7c6;">)</span><span style="color:#a9b7c6;">)</span><span style="color:#cc7832;">;</span></div>
<div class="a m" style="left:0;top:619.5px;height:22px;line-height:22px;white-space:pre">            <span style="color:#cc7832;">return</span> <span style="color:#9876aa;">$request_number</span><span style="color:#cc7832;">;</span></div>
<div class="a m" style="left:0;top:641.5px;height:22px;line-height:22px;white-space:pre">        <span style="color:#a9b7c6;">}</span> <span style="color:#cc7832;">catch</span> <span style="color:#a9b7c6;">(</span><span style="color:#a9b7c6;">PDOException</span> <span style="color:#9876aa;">$e</span><span style="color:#a9b7c6;">)</span> <span style="color:#a9b7c6;">{</span></div>
<div class="a m" style="left:0;top:663.5px;height:22px;line-height:22px;white-space:pre">            <span style="color:#cc7832;">return</span> <span style="color:#9876aa;">$e</span><span style="color:#cc7832;">;</span></div>
<div class="a m" style="left:0;top:685.5px;height:22px;line-height:22px;white-space:pre">        <span style="color:#a9b7c6;">}</span></div>
<div class="a m" style="left:0;top:707.5px;height:22px;line-height:22px;white-space:pre">    <span style="color:#a9b7c6;">}</span></div>
<div class="a m" style="left:0;top:751.5px;height:22px;line-height:22px;white-space:pre">    <span style="color:#cc7832;">private</span> <span style="color:#cc7832;">function</span> <span style="color:#ffc66d;">add_request_item_to_request</span><span style="color:#a9b7c6;">(</span><span style="color:#9876aa;">$request_number</span><span style="color:#cc7832;">,</span> <span style="color:#9876aa;">$request_item_number</span><span style="color:#cc7832;">,</span> <span style="color:#a9b7c6;">&amp;</span><span style="color:#9876aa;">$current_requested_items</span><span style="color:#a9b7c6;">)</span></div>
<div class="a m" style="left:0;top:773.5px;height:22px;line-height:22px;white-space:pre">    <span style="color:#a9b7c6;">{</span></div>
<div class="a m" style="left:0;top:795.5px;height:22px;line-height:22px;white-space:pre">        <span style="color:#9876aa;">$current_requested_items</span><span style="color:#a9b7c6;">[</span><span style="color:#a9b7c6;">]</span> <span style="color:#a9b7c6;">=</span> <span style="color:#9876aa;">$request_item_number</span><span style="color:#cc7832;">;</span></div>
<div class="a m" style="left:0;top:839.5px;height:22px;line-height:22px;white-space:pre">        <span style="color:#cc7832;">try</span> <span style="color:#a9b7c6;">{</span></div>
<div class="a m" style="left:0;top:861.5px;height:22px;line-height:22px;white-space:pre">            <span style="color:#9876aa;">$query</span> <span style="color:#a9b7c6;">=</span> <span style="color:#9876aa;">$this</span><span style="color:#a9b7c6;">-</span><span style="color:#a9b7c6;">&gt;</span><span style="color:#a9b7c6;">_db</span><span style="color:#a9b7c6;">-&gt;</span><span style="color:#ffc66d;">prepare</span><span style="color:#a9b7c6;">(</span></div>
<div class="a" style="left:328.0px;top:861px;width:47px;height:22px;background:#2a2c2d"></div>
<div class="a t" style="left:330.0px;top:863px;width:43px;height:18px;line-height:18px;background:#333435;border-radius:5px;color:#8a8c8e;font-size:11.5px;text-align:center">query:</div>
<div class="a" style="left:384.0px;top:861px;width:792.0px;height:22px;background:#343f33"></div>
<div class="a m" style="left:376.0px;top:861.5px;height:22px;line-height:22px;white-space:pre"><span style="color:#6a8759">"</span><span style="color:#cc7832;">UPDATE</span> <span style="color:#9876aa;">`requests`</span> <span style="color:#cc7832;">SET</span> <span style="color:#9876aa;">`requested_items`</span> <span style="color:#a9b7c6;">=</span> <span style="color:#a9b7c6;">:requested_items</span> <span style="color:#cc7832;">WHERE</span> <span style="color:#9876aa;">`request_number`</span> <span style="color:#a9b7c6;">=</span> <span style="color:#a9b7c6;">:request_number</span><span style="color:#6a8759">"</span><span style="color:#a9b7c6">)</span><span style="color:#cc7832">;</span></div>
<div class="a m" style="left:0;top:883.5px;height:22px;line-height:22px;white-space:pre">            <span style="color:#9876aa;">$query</span><span style="color:#a9b7c6;">-&gt;</span><span style="color:#ffc66d;">execute</span><span style="color:#a9b7c6;">(</span><span style="color:#cc7832;">array</span><span style="color:#a9b7c6;">(</span></div>
<div class="a m" style="left:0;top:905.5px;height:22px;line-height:22px;white-space:pre">                <span style="color:#6a8759;">&quot;:requested_items&quot;</span> <span style="color:#a9b7c6;">=</span><span style="color:#a9b7c6;">&gt;</span> <span style="color:#9876aa;">$current_requested_items</span><span style="color:#cc7832;">,</span></div>
<div class="a m" style="left:0;top:927.5px;height:22px;line-height:22px;white-space:pre">                <span style="color:#6a8759;">&quot;:request_number&quot;</span> <span style="color:#a9b7c6;">=</span><span style="color:#a9b7c6;">&gt;</span> <span style="color:#9876aa;">$request_number</span></div>
<div class="a m" style="left:0;top:949.5px;height:22px;line-height:22px;white-space:pre">            <span style="color:#a9b7c6;">)</span><span style="color:#a9b7c6;">)</span><span style="color:#cc7832;">;</span></div>
<div class="a m" style="left:0;top:993.5px;height:22px;line-height:22px;white-space:pre">            <span style="color:#cc7832;">return</span> <span style="color:#cc7832;">true</span><span style="color:#cc7832;">;</span></div>
<div class="a m" style="left:0;top:1015.5px;height:22px;line-height:22px;white-space:pre">        <span style="color:#a9b7c6;">}</span> <span style="color:#cc7832;">catch</span> <span style="color:#a9b7c6;">(</span><span style="color:#a9b7c6;">PDOException</span> <span style="color:#9876aa;">$e</span><span style="color:#a9b7c6;">)</span> <span style="color:#a9b7c6;">{</span></div>
<div class="a m" style="left:0;top:1037.5px;height:22px;line-height:22px;white-space:pre">            <span style="color:#cc7832;">return</span> <span style="color:#9876aa;">$e</span><span style="color:#cc7832;">;</span></div>
<div class="a m" style="left:0;top:1059.5px;height:22px;line-height:22px;white-space:pre">        <span style="color:#a9b7c6;">}</span></div>
<div class="a m" style="left:0;top:1081.5px;height:22px;line-height:22px;white-space:pre">    <span style="color:#a9b7c6;">}</span></div>
<div class="a m" style="left:0;top:1125.5px;height:22px;line-height:22px;white-space:pre">    <span style="color:#cc7832;">private</span> <span style="color:#cc7832;">function</span> <span style="color:#ffc66d;">get_request_items_from_request</span><span style="color:#a9b7c6;">(</span><span style="color:#9876aa;">$request_number</span><span style="color:#a9b7c6;">)</span></div>
<div class="a m" style="left:0;top:1147.5px;height:22px;line-height:22px;white-space:pre">    <span style="color:#a9b7c6;">{</span></div>
<div class="a m" style="left:0;top:1169.5px;height:22px;line-height:22px;white-space:pre">        <span style="color:#9876aa;">$query</span> <span style="color:#a9b7c6;">=</span> <span style="color:#9876aa;">$this</span><span style="color:#a9b7c6;">-</span><span style="color:#a9b7c6;">&gt;</span><span style="color:#a9b7c6;">_db</span><span style="color:#a9b7c6;">-&gt;</span><span style="color:#ffc66d;">prepare</span><span style="color:#a9b7c6;">(</span></div>
<div class="a" style="left:296.0px;top:1169px;width:47px;height:22px;background:#2a2c2d"></div>
<div class="a t" style="left:298.0px;top:1171px;width:43px;height:18px;line-height:18px;background:#333435;border-radius:5px;color:#8a8c8e;font-size:11.5px;text-align:center">query:</div>
<div class="a" style="left:352.0px;top:1169px;width:648.0px;height:22px;background:#343f33"></div>
<div class="a m" style="left:344.0px;top:1169.5px;height:22px;line-height:22px;white-space:pre"><span style="color:#6a8759">"</span><span style="color:#cc7832;">SELECT</span> <span style="color:#9876aa;">`requested_items`</span> <span style="color:#cc7832;">FROM</span> <span style="color:#9876aa;">`requests`</span> <span style="color:#cc7832;">WHERE</span> <span style="color:#9876aa;">`request_number`</span> <span style="color:#a9b7c6;">=</span> <span style="color:#a9b7c6;">:request_number</span><span style="color:#6a8759">"</span><span style="color:#a9b7c6">)</span><span style="color:#cc7832">;</span></div>
<div class="a m" style="left:0;top:1191.5px;height:22px;line-height:22px;white-space:pre">        <span style="color:#9876aa;">$query</span><span style="color:#a9b7c6;">-&gt;</span><span style="color:#ffc66d;">execute</span><span style="color:#a9b7c6;">(</span><span style="color:#cc7832;">array</span><span style="color:#a9b7c6;">(</span></div>
<div class="a m" style="left:0;top:1213.5px;height:22px;line-height:22px;white-space:pre">            <span style="color:#6a8759;">&quot;:request_number&quot;</span> <span style="color:#a9b7c6;">=</span><span style="color:#a9b7c6;">&gt;</span> <span style="color:#9876aa;">$request_number</span></div>
<div class="a m" style="left:0;top:1235.5px;height:22px;line-height:22px;white-space:pre">        <span style="color:#a9b7c6;">)</span><span style="color:#a9b7c6;">)</span><span style="color:#cc7832;">;</span></div>
</div>
<div class="a" style="left:1279px;top:85px;width:1px;height:1249px;background:#3b3d3e;"></div>
<svg class="a" style="left:879.0px;top:194px;" width="32.0" height="4" viewBox="0 0 32.0 4"><polyline points="0,3 2,0.5 4,3 6,0.5 8,3 10,0.5 12,3 14,0.5 16,3 18,0.5 20,3 22,0.5 24,3 26,0.5 28,3 30,0.5 32,3" fill="none" stroke="#5f8c5a" stroke-width="1"/></svg>
<svg class="a" style="left:455.0px;top:260px;" width="32.0" height="4" viewBox="0 0 32.0 4"><polyline points="0,3 2,0.5 4,3 6,0.5 8,3 10,0.5 12,3 14,0.5 16,3 18,0.5 20,3 22,0.5 24,3 26,0.5 28,3 30,0.5 32,3" fill="none" stroke="#5f8c5a" stroke-width="1"/></svg>
<svg class="a" style="left:551.0px;top:260px;" width="32.0" height="4" viewBox="0 0 32.0 4"><polyline points="0,3 2,0.5 4,3 6,0.5 8,3 10,0.5 12,3 14,0.5 16,3 18,0.5 20,3 22,0.5 24,3 26,0.5 28,3 30,0.5 32,3" fill="none" stroke="#5f8c5a" stroke-width="1"/></svg>
<svg class="a" style="left:735.0px;top:260px;" width="40.0" height="4" viewBox="0 0 40.0 4"><polyline points="0,3 2,0.5 4,3 6,0.5 8,3 10,0.5 12,3 14,0.5 16,3 18,0.5 20,3 22,0.5 24,3 26,0.5 28,3 30,0.5 32,3 34,0.5 36,3 38,0.5 40,3" fill="none" stroke="#5f8c5a" stroke-width="1"/></svg>
<svg class="a" style="left:935.0px;top:260px;" width="56.0" height="4" viewBox="0 0 56.0 4"><polyline points="0,3 2,0.5 4,3 6,0.5 8,3 10,0.5 12,3 14,0.5 16,3 18,0.5 20,3 22,0.5 24,3 26,0.5 28,3 30,0.5 32,3 34,0.5 36,3 38,0.5 40,3 42,0.5 44,3 46,0.5 48,3 50,0.5 52,3 54,0.5 56,3" fill="none" stroke="#5f8c5a" stroke-width="1"/></svg>
<svg class="a" style="left:1063.0px;top:260px;" width="32.0" height="4" viewBox="0 0 32.0 4"><polyline points="0,3 2,0.5 4,3 6,0.5 8,3 10,0.5 12,3 14,0.5 16,3 18,0.5 20,3 22,0.5 24,3 26,0.5 28,3 30,0.5 32,3" fill="none" stroke="#5f8c5a" stroke-width="1"/></svg>
<svg class="a" style="left:679.0px;top:348px;" width="32.0" height="4" viewBox="0 0 32.0 4"><polyline points="0,3 2,0.5 4,3 6,0.5 8,3 10,0.5 12,3 14,0.5 16,3 18,0.5 20,3 22,0.5 24,3 26,0.5 28,3 30,0.5 32,3" fill="none" stroke="#5f8c5a" stroke-width="1"/></svg>
<svg class="a" style="left:887.0px;top:348px;" width="32.0" height="4" viewBox="0 0 32.0 4"><polyline points="0,3 2,0.5 4,3 6,0.5 8,3 10,0.5 12,3 14,0.5 16,3 18,0.5 20,3 22,0.5 24,3 26,0.5 28,3 30,0.5 32,3" fill="none" stroke="#5f8c5a" stroke-width="1"/></svg>
<svg class="a" style="left:999.0px;top:348px;" width="32.0" height="4" viewBox="0 0 32.0 4"><polyline points="0,3 2,0.5 4,3 6,0.5 8,3 10,0.5 12,3 14,0.5 16,3 18,0.5 20,3 22,0.5 24,3 26,0.5 28,3 30,0.5 32,3" fill="none" stroke="#5f8c5a" stroke-width="1"/></svg>
<svg class="a" style="left:463.0px;top:546px;" width="32.0" height="4" viewBox="0 0 32.0 4"><polyline points="0,3 2,0.5 4,3 6,0.5 8,3 10,0.5 12,3 14,0.5 16,3 18,0.5 20,3 22,0.5 24,3 26,0.5 28,3 30,0.5 32,3" fill="none" stroke="#5f8c5a" stroke-width="1"/></svg>
<svg class="a" style="left:463.0px;top:568px;" width="32.0" height="4" viewBox="0 0 32.0 4"><polyline points="0,3 2,0.5 4,3 6,0.5 8,3 10,0.5 12,3 14,0.5 16,3 18,0.5 20,3 22,0.5 24,3 26,0.5 28,3 30,0.5 32,3" fill="none" stroke="#5f8c5a" stroke-width="1"/></svg>
<svg class="a" style="left:463.0px;top:590px;" width="32.0" height="4" viewBox="0 0 32.0 4"><polyline points="0,3 2,0.5 4,3 6,0.5 8,3 10,0.5 12,3 14,0.5 16,3 18,0.5 20,3 22,0.5 24,3 26,0.5 28,3 30,0.5 32,3" fill="none" stroke="#5f8c5a" stroke-width="1"/></svg>
<svg class="a" style="left:463.0px;top:612px;" width="32.0" height="4" viewBox="0 0 32.0 4"><polyline points="0,3 2,0.5 4,3 6,0.5 8,3 10,0.5 12,3 14,0.5 16,3 18,0.5 20,3 22,0.5 24,3 26,0.5 28,3 30,0.5 32,3" fill="none" stroke="#5f8c5a" stroke-width="1"/></svg>
<svg class="a" style="left:463.0px;top:634px;" width="32.0" height="4" viewBox="0 0 32.0 4"><polyline points="0,3 2,0.5 4,3 6,0.5 8,3 10,0.5 12,3 14,0.5 16,3 18,0.5 20,3 22,0.5 24,3 26,0.5 28,3 30,0.5 32,3" fill="none" stroke="#5f8c5a" stroke-width="1"/></svg>
<svg class="a" style="left:463.0px;top:656px;" width="32.0" height="4" viewBox="0 0 32.0 4"><polyline points="0,3 2,0.5 4,3 6,0.5 8,3 10,0.5 12,3 14,0.5 16,3 18,0.5 20,3 22,0.5 24,3 26,0.5 28,3 30,0.5 32,3" fill="none" stroke="#5f8c5a" stroke-width="1"/></svg>
<svg class="a" style="left:583.0px;top:634px;" width="32.0" height="4" viewBox="0 0 32.0 4"><polyline points="0,3 2,0.5 4,3 6,0.5 8,3 10,0.5 12,3 14,0.5 16,3 18,0.5 20,3 22,0.5 24,3 26,0.5 28,3 30,0.5 32,3" fill="none" stroke="#5f8c5a" stroke-width="1"/></svg>
<svg class="a" style="left:687.0px;top:656px;" width="32.0" height="4" viewBox="0 0 32.0 4"><polyline points="0,3 2,0.5 4,3 6,0.5 8,3 10,0.5 12,3 14,0.5 16,3 18,0.5 20,3 22,0.5 24,3 26,0.5 28,3 30,0.5 32,3" fill="none" stroke="#5f8c5a" stroke-width="1"/></svg>
<svg class="a" style="left:487.0px;top:854px;" width="216.0" height="4" viewBox="0 0 216.0 4"><polyline points="0,3 2,0.5 4,3 6,0.5 8,3 10,0.5 12,3 14,0.5 16,3 18,0.5 20,3 22,0.5 24,3 26,0.5 28,3 30,0.5 32,3 34,0.5 36,3 38,0.5 40,3 42,0.5 44,3 46,0.5 48,3 50,0.5 52,3 54,0.5 56,3 58,0.5 60,3 62,0.5 64,3 66,0.5 68,3 70,0.5 72,3 74,0.5 76,3 78,0.5 80,3 82,0.5 84,3 86,0.5 88,3 90,0.5 92,3 94,0.5 96,3 98,0.5 100,3 102,0.5 104,3 106,0.5 108,3 110,0.5 112,3 114,0.5 116,3 118,0.5 120,3 122,0.5 124,3 126,0.5 128,3 130,0.5 132,3 134,0.5 136,3 138,0.5 140,3 142,0.5 144,3 146,0.5 148,3 150,0.5 152,3 154,0.5 156,3 158,0.5 160,3 162,0.5 164,3 166,0.5 168,3 170,0.5 172,3 174,0.5 176,3 178,0.5 180,3 182,0.5 184,3 186,0.5 188,3 190,0.5 192,3 194,0.5 196,3 198,0.5 200,3 202,0.5 204,3 206,0.5 208,3 210,0.5 212,3 214,0.5 216,3" fill="none" stroke="#8a8a6a" stroke-width="1"/></svg>
<svg class="a" style="left:326px;top:793px;" width="14" height="16" viewBox="0 0 14 16"><circle cx="7" cy="5.5" r="5" fill="#f0a732"/><rect x="4.5" y="8" width="5" height="3" fill="#f0a732"/><path d="M4 12.5 H10 M4.5 14.5 H9.5" stroke="#c9c9c9" stroke-width="1"/></svg>
<div class="a" style="left:1930px;top:87px;width:140px;height:22px;background:#2b2d2e;border-radius:4px"></div>
<svg class="a" style="left:1939px;top:91px;" width="14" height="14" viewBox="0 0 14 14"><path d="M7 1 L13.5 13 H0.5 Z" fill="#e2a324"/><path d="M7 5 V9 M7 10.5 V12" stroke="#2b2d2e" stroke-width="1.6"/></svg>
<div class="a t" style="left:1954px;top:89px;height:21px;line-height:21px;color:#bbbbbb;font-size:12px;">1</div>
<svg class="a" style="left:1967px;top:91px;" width="14" height="14" viewBox="0 0 14 14"><path d="M7 1 L13.5 13 H0.5 Z" fill="#8e8264"/><path d="M7 5 V9 M7 10.5 V12" stroke="#2b2d2e" stroke-width="1.6"/></svg>
<div class="a t" style="left:1983px;top:89px;height:21px;line-height:21px;color:#bbbbbb;font-size:12px;">4</div>
<svg class="a" style="left:1995px;top:91px;" width="14" height="15" viewBox="0 0 14 15"><path d="M1 6 L5 10 L13 1" fill="none" stroke="#499c54" stroke-width="2"/><path d="M1 13 L3 11 L5 13 L7 11 L9 13 L11 11 L13 13" fill="none" stroke="#499c54" stroke-width="1.2"/></svg>
<div class="a t" style="left:2011px;top:89px;height:21px;line-height:21px;color:#bbbbbb;font-size:12px;letter-spacing:-0.464px;">17</div>
<svg class="a" style="left:2033px;top:93px;" width="11" height="8" viewBox="0 0 11 8"><path d="M1 6.5 L5.5 2 L10 6.5" fill="none" stroke="#afb1b3" stroke-width="1.4"/></svg>
<svg class="a" style="left:2054px;top:93px;" width="11" height="8" viewBox="0 0 11 8"><path d="M1 1.5 L5.5 6 L10 1.5" fill="none" stroke="#afb1b3" stroke-width="1.4"/></svg>
<div class="a" style="left:2063px;top:396px;width:8px;height:808px;background:rgba(255,255,255,0.16);"></div>
<div class="a" style="left:2058px;top:496px;width:14px;height:2px;background:#2a8ad0;"></div>
<div class="a" style="left:2058px;top:140px;width:14px;height:2px;background:#807660;"></div>
<div class="a" style="left:2058px;top:197px;width:14px;height:2px;background:#d0a020;"></div>
<div class="a" style="left:2058px;top:453px;width:14px;height:2px;background:#9c8e6b;"></div>
<div class="a" style="left:2058px;top:882px;width:14px;height:2px;background:#9c8e6b;"></div>
<div class="a" style="left:320px;top:1325px;width:1282px;height:9px;background:rgba(255,255,255,0.17);"></div>
<div class="a" style="left:255px;top:1334px;width:1817px;height:23px;background:#323435;"></div>
<div class="a" style="left:255px;top:1334px;width:1817px;height:1px;background:#393b3c;"></div>
<div class="a t" style="left:265px;top:1336px;height:23px;line-height:23px;color:#bbbbbb;font-size:12px;letter-spacing:-0.302px;">RequestItem</div>
<svg class="a" style="left:341px;top:1342px;" width="6" height="10" viewBox="0 0 6 10"><path d="M1 1 L5 5 L1 9" fill="none" stroke="#6e7072"/></svg>
<div class="a t" style="left:355px;top:1336px;height:23px;line-height:23px;color:#bbbbbb;font-size:12px;letter-spacing:-0.219px;">create_request_item()</div>
<div class="a" style="left:2072px;top:58px;width:1px;height:1299px;background:#313232;"></div>
<div class="a" style="left:2073px;top:58px;width:466px;height:1299px;background:#3c3f41;"></div>
<div class="a" style="left:2073px;top:84px;width:466px;height:1px;background:#2b2b2b;"></div>
<div class="a t" style="left:2079px;top:59px;height:26px;line-height:26px;color:#bbbbbb;font-size:12px;letter-spacing:-0.480px;">Database</div>
<svg class="a" style="left:2407px;top:63px;" width="16" height="16" viewBox="0 0 16 16"><circle cx="8" cy="8" r="6.3" fill="none" stroke="#afb1b3" stroke-width="1.7"/><path d="M8 1.5 V6 M8 10 V14.5 M1.5 8 H6 M10 8 H14.5" stroke="#afb1b3" stroke-width="1.7"/></svg>
<svg class="a" style="left:2433px;top:63px;" width="16" height="16" viewBox="0 0 16 16"><path d="M2 1.5 H14 M2 14.5 H14" stroke="#afb1b3" stroke-width="1.8"/><path d="M5 7 L8 4.2 L11 7 Z M5 9 L8 11.8 L11 9 Z" fill="#afb1b3"/></svg>
<svg class="a" style="left:2459px;top:63px;" width="16" height="16" viewBox="0 0 16 16"><path d="M2 8 H14" stroke="#afb1b3" stroke-width="1.8"/><path d="M5 2 L8 5 L11 2 Z M5 14 L8 11 L11 14 Z" fill="#afb1b3"/></svg>
<div class="a" style="left:2483px;top:62px;width:1px;height:18px;background:#515355;"></div>
<svg class="a" style="left:2492px;top:63px;" width="16" height="16" viewBox="0 0 16 16"><g fill="#afb1b3"><circle cx="8" cy="8" r="5"/><rect x="6.6" y="0.8" width="2.8" height="14.4" rx="0.8" transform="rotate(0 8 8)"/><rect x="6.6" y="0.8" width="2.8" height="14.4" rx="0.8" transform="rotate(45 8 8)"/><rect x="6.6" y="0.8" width="2.8" height="14.4" rx="0.8" transform="rotate(90 8 8)"/><rect x="6.6" y="0.8" width="2.8" height="14.4" rx="0.8" transform="rotate(135 8 8)"/></g><circle cx="8" cy="8" r="2.2" fill="#3c3f41"/></svg>
<div class="a" style="left:2520px;top:70px;width:12px;height:2px;background:#afb1b3;"></div>
<div class="a" style="left:2073px;top:112px;width:466px;height:1px;background:#323232;"></div>
<svg class="a" style="left:2082px;top:91px;" width="17" height="18" viewBox="0 0 17 18"><path d="M6 1.5 V12.5 M0.5 7 H11.5" stroke="#afb1b3" stroke-width="2"/><path d="M9 14 H15 L12 17 Z" fill="#afb1b3"/></svg>
<svg class="a" style="left:2107px;top:91px;" width="15" height="16" viewBox="0 0 15 16"><rect x="0.5" y="0.5" width="9" height="10" fill="#5f6264"/><rect x="3" y="3" width="10" height="11" fill="#5f6264" stroke="#3c3f41" stroke-width="1"/><path d="M5.5 6.5 H11 M5.5 9 H11 M5.5 11.5 H11" stroke="#3c3f41" stroke-width="1"/></svg>
<div class="a" style="left:2130px;top:89px;width:1px;height:20px;background:#515355;"></div>
<svg class="a" style="left:2140px;top:91px;" width="14" height="15" viewBox="0 0 14 15"><path d="M12.2 5 A5.6 5.6 0 0 0 2 4.2 M1.8 9.5 A5.6 5.6 0 0 0 12 10.4" fill="none" stroke="#afb1b3" stroke-width="2"/><path d="M0 1 L0.5 6.5 L5.5 5 Z M14 14 L13.5 8.5 L8.5 10 Z" fill="#afb1b3"/></svg>
<svg class="a" style="left:2164px;top:91px;" width="17" height="15" viewBox="0 0 17 15"><ellipse cx="6.5" cy="2.5" rx="6" ry="2" fill="#afb1b3"/><path d="M0.5 4.5 Q6.5 7 12.5 4.5 V6.5 Q6.5 9 0.5 6.5 Z M0.5 8.5 Q4 10 7 10 V12 Q3 12 0.5 10.5 Z" fill="#afb1b3"/><path d="M7 14 L12 9" stroke="#afb1b3" stroke-width="2.4"/><circle cx="13.5" cy="7.5" r="2.8" fill="#afb1b3"/><path d="M13.5 7.5 L16 5" stroke="#3c3f41" stroke-width="1.6"/></svg>
<svg class="a" style="left:2192px;top:91px;" width="16" height="16" viewBox="0 0 16 16"><ellipse cx="7" cy="2.5" rx="6.5" ry="2.2" fill="#afb1b3"/><path d="M0.5 4.8 Q7 7.8 13.5 4.8 V7 Q7 10 0.5 7 Z M0.5 9.2 Q7 12.2 13.5 9.2 V11.4 Q7 14.4 0.5 11.4 Z" fill="#afb1b3"/><rect x="10" y="10" width="6" height="6" fill="#db5c5c"/></svg>
<div class="a" style="left:2215px;top:89px;width:1px;height:20px;background:#515355;"></div>
<svg class="a" style="left:2225px;top:92px;" width="15" height="13" viewBox="0 0 15 13"><rect x="0" y="0" width="15" height="13" fill="#a9b0b5"/><rect x="0" y="0" width="15" height="2" fill="#c4ccd1"/><g fill="#3c3f41"><rect x="1" y="3" width="3.5" height="2.5"/><rect x="5.75" y="3" width="3.5" height="2.5"/><rect x="10.5" y="3" width="3.5" height="2.5"/><rect x="1" y="6.5" width="3.5" height="2.5"/><rect x="5.75" y="6.5" width="3.5" height="2.5"/><rect x="10.5" y="6.5" width="3.5" height="2.5"/><rect x="1" y="10" width="3.5" height="2"/><rect x="5.75" y="10" width="3.5" height="2"/><rect x="10.5" y="10" width="3.5" height="2"/></g></svg>
<svg class="a" style="left:2251px;top:91px;" width="15" height="16" viewBox="0 0 15 16"><path d="M2.5 11.5 L11 3 L13 5 L4.5 13.5 H2.5 Z" fill="#afb1b3"/><path d="M12 2 L13 1 L15 3 L14 4 Z" fill="#afb1b3"/><path d="M0 14.8 H15" stroke="#afb1b3" stroke-width="1.6"/></svg>
<svg class="a" style="left:2277px;top:91px;" width="15" height="16" viewBox="0 0 15 16"><path d="M14.5 3.5 H9 M9 3.5 L6.5 6" stroke="#3592c4" stroke-width="2"/><path d="M10 0 L6.5 3.5 L10 7 Z" fill="#3592c4"/><path d="M0.5 11.5 H6 M6 11.5 L8.5 9" stroke="#3592c4" stroke-width="2"/><path d="M5 8 L8.5 11.5 L5 15 Z" fill="#3592c4"/></svg>
<svg class="a" style="left:2303px;top:92px;" width="15" height="14" viewBox="0 0 15 14"><rect x="0.75" y="0.75" width="13.5" height="12.5" fill="none" stroke="#afb1b3" stroke-width="1.5"/><path d="M0.75 2.8 H14.25" stroke="#afb1b3" stroke-width="1.2"/><text x="7.5" y="11" font-size="6.5" font-family="Liberation Sans" font-weight="bold" fill="#afb1b3" text-anchor="middle">QL</text></svg>
<div class="a" style="left:2327px;top:89px;width:1px;height:20px;background:#515355;"></div>
<svg class="a" style="left:2337px;top:92px;" width="13" height="14" viewBox="0 0 13 14"><path d="M0 0.5 H13 L8 6.5 V13.5 L5 13.5 V6.5 Z" fill="#afb1b3"/></svg>
<svg class="a" style="left:2080px;top:119px;" width="10" height="10" viewBox="0 0 10 10"><path d="M0.8 2.2 L5 6.5 L9.2 2.2" fill="none" stroke="#9a9da0" stroke-width="1.2"/></svg>
<svg class="a" style="left:2097px;top:116px;" width="18" height="17" viewBox="0 0 18 17"><path d="M1 14 Q4 8 10 6 L16 1 L13 8 Q11 13 4 14 Z" fill="none" stroke="#afb1b3" stroke-width="1.2"/><circle cx="14" cy="14" r="2.3" fill="#1fd51f" stroke="#1a1a1a" stroke-width="0.6"/></svg>
<div class="a t" style="left:2119px;top:115px;height:20px;line-height:20px;color:#bbbbbb;font-size:12px;letter-spacing:-0.344px;">stevensm_roerveen_panel@193.108.200.10</div>
<div class="a t" style="left:2350.2385px;top:115px;width:35px;height:18px;line-height:18px;border:1px solid #4e5254;border-radius:3px;color:#787a7c;font-size:11px;text-align:center;box-sizing:border-box">1 of 2</div>
<svg class="a" style="left:2098px;top:139px;" width="10" height="10" viewBox="0 0 10 10"><path d="M0.8 2.2 L5 6.5 L9.2 2.2" fill="none" stroke="#9a9da0" stroke-width="1.2"/></svg>
<svg class="a" style="left:2115px;top:136px;" width="17" height="16" viewBox="0 0 17 16"><rect x="9" y="0" width="6" height="5" fill="#3d8fb5"/><rect x="1" y="9" width="6" height="6" fill="#3d8fb5"/><rect x="9" y="10" width="6" height="5" fill="#3d8fb5"/><path d="M4 9 V5 H9 M12 5 V10" fill="none" stroke="#afb1b3" stroke-width="1.5"/></svg>
<div class="a t" style="left:2137px;top:135px;height:20px;line-height:20px;color:#bbbbbb;font-size:12px;letter-spacing:-0.316px;">stevensm_roerveen_panel</div>
<svg class="a" style="left:2116px;top:159px;" width="10" height="10" viewBox="0 0 10 10"><path d="M0.8 2.2 L5 6.5 L9.2 2.2" fill="none" stroke="#9a9da0" stroke-width="1.2"/></svg>
<svg class="a" style="left:2133px;top:155px;" width="16" height="16" viewBox="0 0 16 16"><path d="M1 3 H6 L7.5 5 H15 V14 H1 Z" fill="#3f86a5"/></svg>
<div class="a t" style="left:2155px;top:155px;height:20px;line-height:20px;color:#bbbbbb;font-size:12px;letter-spacing:-0.117px;">tables</div>
<div class="a t" style="left:2192.9295px;top:155px;height:20px;line-height:20px;color:#7f8284;font-size:11px;letter-spacing:0.070px;">13</div>
<svg class="a" style="left:2134px;top:179px;" width="10" height="10" viewBox="0 0 10 10"><path d="M3 0.8 L7.3 5 L3 9.2" fill="none" stroke="#9a9da0" stroke-width="1.2"/></svg>
<svg class="a" style="left:2151px;top:176px;" width="16" height="16" viewBox="0 0 16 16"><rect x="1" y="2" width="14" height="12" fill="#a9b0b5"/><g fill="#3c3f41"><rect x="2.2" y="5.5" width="3.2" height="2"/><rect x="6.4" y="5.5" width="3.2" height="2"/><rect x="10.6" y="5.5" width="3.2" height="2"/><rect x="2.2" y="8.5" width="3.2" height="2"/><rect x="6.4" y="8.5" width="3.2" height="2"/><rect x="10.6" y="8.5" width="3.2" height="2"/><rect x="2.2" y="11.5" width="3.2" height="2"/><rect x="6.4" y="11.5" width="3.2" height="2"/><rect x="10.6" y="11.5" width="3.2" height="2"/></g></svg>
<div class="a t" style="left:2173px;top:175px;height:20px;line-height:20px;color:#bbbbbb;font-size:12px;letter-spacing:-0.338px;">bans</div>
<svg class="a" style="left:2134px;top:199px;" width="10" height="10" viewBox="0 0 10 10"><path d="M3 0.8 L7.3 5 L3 9.2" fill="none" stroke="#9a9da0" stroke-width="1.2"/></svg>
<svg class="a" style="left:2151px;top:196px;" width="16" height="16" viewBox="0 0 16 16"><rect x="1" y="2" width="14" height="12" fill="#a9b0b5"/><g fill="#3c3f41"><rect x="2.2" y="5.5" width="3.2" height="2"/><rect x="6.4" y="5.5" width="3.2" height="2"/><rect x="10.6" y="5.5" width="3.2" height="2"/><rect x="2.2" y="8.5" width="3.2" height="2"/><rect x="6.4" y="8.5" width="3.2" height="2"/><rect x="10.6" y="8.5" width="3.2" height="2"/><rect x="2.2" y="11.5" width="3.2" height="2"/><rect x="6.4" y="11.5" width="3.2" height="2"/><rect x="10.6" y="11.5" width="3.2" height="2"/></g></svg>
<div class="a t" style="left:2173px;top:195px;height:20px;line-height:20px;color:#bbbbbb;font-size:12px;letter-spacing:-0.025px;">logs</div>
<svg class="a" style="left:2134px;top:219px;" width="10" height="10" viewBox="0 0 10 10"><path d="M3 0.8 L7.3 5 L3 9.2" fill="none" stroke="#9a9da0" stroke-width="1.2"/></svg>
<svg class="a" style="left:2151px;top:216px;" width="16" height="16" viewBox="0 0 16 16"><rect x="1" y="2" width="14" height="12" fill="#a9b0b5"/><g fill="#3c3f41"><rect x="2.2" y="5.5" width="3.2" height="2"/><rect x="6.4" y="5.5" width="3.2" height="2"/><rect x="10.6" y="5.5" width="3.2" height="2"/><rect x="2.2" y="8.5" width="3.2" height="2"/><rect x="6.4" y="8.5" width="3.2" height="2"/><rect x="10.6" y="8.5" width="3.2" height="2"/><rect x="2.2" y="11.5" width="3.2" height="2"/><rect x="6.4" y="11.5" width="3.2" height="2"/><rect x="10.6" y="11.5" width="3.2" height="2"/></g></svg>
<div class="a t" style="left:2173px;top:215px;height:20px;line-height:20px;color:#bbbbbb;font-size:12px;letter-spacing:-0.187px;">member_logs</div>
<svg class="a" style="left:2134px;top:239px;" width="10" height="10" viewBox="0 0 10 10"><path d="M3 0.8 L7.3 5 L3 9.2" fill="none" stroke="#9a9da0" stroke-width="1.2"/></svg>
<svg class="a" style="left:2151px;top:236px;" width="16" height="16" viewBox="0 0 16 16"><rect x="1" y="2" width="14" height="12" fill="#a9b0b5"/><g fill="#3c3f41"><rect x="2.2" y="5.5" width="3.2" height="2"/><rect x="6.4" y="5.5" width="3.2" height="2"/><rect x="10.6" y="5.5" width="3.2" height="2"/><rect x="2.2" y="8.5" width="3.2" height="2"/><rect x="6.4" y="8.5" width="3.2" height="2"/><rect x="10.6" y="8.5" width="3.2" height="2"/><rect x="2.2" y="11.5" width="3.2" height="2"/><rect x="6.4" y="11.5" width="3.2" height="2"/><rect x="10.6" y="11.5" width="3.2" height="2"/></g></svg>
<div class="a t" style="left:2173px;top:235px;height:20px;line-height:20px;color:#bbbbbb;font-size:12px;letter-spacing:-0.110px;">members</div>
<svg class="a" style="left:2134px;top:259px;" width="10" height="10" viewBox="0 0 10 10"><path d="M3 0.8 L7.3 5 L3 9.2" fill="none" stroke="#9a9da0" stroke-width="1.2"/></svg>
<svg class="a" style="left:2151px;top:256px;" width="16" height="16" viewBox="0 0 16 16"><rect x="1" y="2" width="14" height="12" fill="#a9b0b5"/><g fill="#3c3f41"><rect x="2.2" y="5.5" width="3.2" height="2"/><rect x="6.4" y="5.5" width="3.2" height="2"/><rect x="10.6" y="5.5" width="3.2" height="2"/><rect x="2.2" y="8.5" width="3.2" height="2"/><rect x="6.4" y="8.5" width="3.2" height="2"/><rect x="10.6" y="8.5" width="3.2" height="2"/><rect x="2.2" y="11.5" width="3.2" height="2"/><rect x="6.4" y="11.5" width="3.2" height="2"/><rect x="10.6" y="11.5" width="3.2" height="2"/></g></svg>
<div class="a t" style="left:2173px;top:255px;height:20px;line-height:20px;color:#bbbbbb;font-size:12px;letter-spacing:-0.071px;">notes</div>
<svg class="a" style="left:2134px;top:279px;" width="10" height="10" viewBox="0 0 10 10"><path d="M3 0.8 L7.3 5 L3 9.2" fill="none" stroke="#9a9da0" stroke-width="1.2"/></svg>
<svg class="a" style="left:2151px;top:276px;" width="16" height="16" viewBox="0 0 16 16"><rect x="1" y="2" width="14" height="12" fill="#a9b0b5"/><g fill="#3c3f41"><rect x="2.2" y="5.5" width="3.2" height="2"/><rect x="6.4" y="5.5" width="3.2" height="2"/><rect x="10.6" y="5.5" width="3.2" height="2"/><rect x="2.2" y="8.5" width="3.2" height="2"/><rect x="6.4" y="8.5" width="3.2" height="2"/><rect x="10.6" y="8.5" width="3.2" height="2"/><rect x="2.2" y="11.5" width="3.2" height="2"/><rect x="6.4" y="11.5" width="3.2" height="2"/><rect x="10.6" y="11.5" width="3.2" height="2"/></g></svg>
<div class="a t" style="left:2173px;top:275px;height:20px;line-height:20px;color:#bbbbbb;font-size:12px;letter-spacing:-0.240px;">personal_notes</div>
<svg class="a" style="left:2134px;top:299px;" width="10" height="10" viewBox="0 0 10 10"><path d="M3 0.8 L7.3 5 L3 9.2" fill="none" stroke="#9a9da0" stroke-width="1.2"/></svg>
<svg class="a" style="left:2151px;top:296px;" width="16" height="16" viewBox="0 0 16 16"><rect x="1" y="2" width="14" height="12" fill="#a9b0b5"/><g fill="#3c3f41"><rect x="2.2" y="5.5" width="3.2" height="2"/><rect x="6.4" y="5.5" width="3.2" height="2"/><rect x="10.6" y="5.5" width="3.2" height="2"/><rect x="2.2" y="8.5" width="3.2" height="2"/><rect x="6.4" y="8.5" width="3.2" height="2"/><rect x="10.6" y="8.5" width="3.2" height="2"/><rect x="2.2" y="11.5" width="3.2" height="2"/><rect x="6.4" y="11.5" width="3.2" height="2"/><rect x="10.6" y="11.5" width="3.2" height="2"/></g></svg>
<div class="a t" style="left:2173px;top:295px;height:20px;line-height:20px;color:#bbbbbb;font-size:12px;letter-spacing:-0.335px;">ranks</div>
<svg class="a" style="left:2134px;top:319px;" width="10" height="10" viewBox="0 0 10 10"><path d="M0.8 2.2 L5 6.5 L9.2 2.2" fill="none" stroke="#9a9da0" stroke-width="1.2"/></svg>
<svg class="a" style="left:2151px;top:316px;" width="16" height="16" viewBox="0 0 16 16"><rect x="1" y="2" width="14" height="12" fill="#a9b0b5"/><g fill="#3c3f41"><rect x="2.2" y="5.5" width="3.2" height="2"/><rect x="6.4" y="5.5" width="3.2" height="2"/><rect x="10.6" y="5.5" width="3.2" height="2"/><rect x="2.2" y="8.5" width="3.2" height="2"/><rect x="6.4" y="8.5" width="3.2" height="2"/><rect x="10.6" y="8.5" width="3.2" height="2"/><rect x="2.2" y="11.5" width="3.2" height="2"/><rect x="6.4" y="11.5" width="3.2" height="2"/><rect x="10.6" y="11.5" width="3.2" height="2"/></g></svg>
<div class="a t" style="left:2173px;top:315px;height:20px;line-height:20px;color:#bbbbbb;font-size:12px;letter-spacing:-0.223px;">request_items</div>
<svg class="a" style="left:2152px;top:339px;" width="10" height="10" viewBox="0 0 10 10"><path d="M0.8 2.2 L5 6.5 L9.2 2.2" fill="none" stroke="#9a9da0" stroke-width="1.2"/></svg>
<svg class="a" style="left:2169px;top:335px;" width="16" height="16" viewBox="0 0 16 16"><path d="M1 3 H6 L7.5 5 H15 V14 H1 Z" fill="#3f86a5"/></svg>
<div class="a t" style="left:2191px;top:335px;height:20px;line-height:20px;color:#bbbbbb;font-size:12px;letter-spacing:-0.092px;">columns</div>
<div class="a t" style="left:2241.637px;top:335px;height:20px;line-height:20px;color:#7f8284;font-size:11px;letter-spacing:0.883px;">11</div>
<svg class="a" style="left:2187px;top:357px;" width="17" height="16" viewBox="0 0 17 16"><rect x="0.8" y="1" width="5" height="9" fill="#3d8fb5"/><circle cx="3.2" cy="12.2" r="2.6" fill="#9aa4ab"/><rect x="7" y="1" width="8" height="2" fill="#9aa4ab"/><path d="M7 5.5 H10 M7 8.5 H9.5 M7 11.5 H9.5" stroke="#9aa4ab" stroke-width="1.4"/><circle cx="12.5" cy="6.2" r="2.4" fill="none" stroke="#e8a83a" stroke-width="1.8"/><path d="M12.5 8.5 V15 M12.5 12 H15 M12.5 14.5 H14.5" stroke="#e8a83a" stroke-width="1.8"/></svg>
<div class="a t" style="left:2209px;top:355px;height:20px;line-height:20px;color:#bbbbbb;font-size:12px;letter-spacing:-0.040px;">ritm_id</div>
<div class="a t" style="left:2254.2765px;top:355px;height:20px;line-height:20px;color:#7f8284;font-size:11px;letter-spacing:0.219px;">int (auto increment)</div>
<svg class="a" style="left:2187px;top:377px;" width="16" height="16" viewBox="0 0 16 16"><rect x="0.8" y="1" width="5" height="12" fill="#9aa4ab"/><rect x="7" y="1" width="8" height="12" fill="#9aa4ab"/><g fill="#3c3f41"><rect x="8.2" y="5" width="2.6" height="1.8"/><rect x="11.6" y="5" width="2.6" height="1.8"/><rect x="8.2" y="8" width="2.6" height="1.8"/><rect x="11.6" y="8" width="2.6" height="1.8"/><rect x="8.2" y="11" width="2.6" height="1.8"/><rect x="11.6" y="11" width="2.6" height="1.8"/></g></svg>
<div class="a t" style="left:2209px;top:375px;height:20px;line-height:20px;color:#bbbbbb;font-size:12px;letter-spacing:-0.030px;">ritm_number</div>
<div class="a t" style="left:2285.5565px;top:375px;height:20px;line-height:20px;color:#7f8284;font-size:11px;letter-spacing:0.045px;">varchar(11)</div>
<svg class="a" style="left:2187px;top:397px;" width="16" height="16" viewBox="0 0 16 16"><rect x="0.8" y="1" width="5" height="12" fill="#9aa4ab"/><rect x="7" y="1" width="8" height="12" fill="#9aa4ab"/><g fill="#3c3f41"><rect x="8.2" y="5" width="2.6" height="1.8"/><rect x="11.6" y="5" width="2.6" height="1.8"/><rect x="8.2" y="8" width="2.6" height="1.8"/><rect x="11.6" y="8" width="2.6" height="1.8"/><rect x="8.2" y="11" width="2.6" height="1.8"/><rect x="11.6" y="11" width="2.6" height="1.8"/></g></svg>
<div class="a t" style="left:2209px;top:395px;height:20px;line-height:20px;color:#bbbbbb;font-size:12px;letter-spacing:-0.197px;">ritm_requested_by</div>
<div class="a t" style="left:2314.7205px;top:395px;height:20px;line-height:20px;color:#7f8284;font-size:11px;letter-spacing:0.126px;">int(18)</div>
<svg class="a" style="left:2187px;top:417px;" width="16" height="16" viewBox="0 0 16 16"><rect x="0.8" y="1" width="5" height="12" fill="#9aa4ab"/><rect x="7" y="1" width="8" height="12" fill="#9aa4ab"/><g fill="#3c3f41"><rect x="8.2" y="5" width="2.6" height="1.8"/><rect x="11.6" y="5" width="2.6" height="1.8"/><rect x="8.2" y="8" width="2.6" height="1.8"/><rect x="11.6" y="8" width="2.6" height="1.8"/><rect x="8.2" y="11" width="2.6" height="1.8"/><rect x="11.6" y="11" width="2.6" height="1.8"/></g></svg>
<div class="a t" style="left:2209px;top:415px;height:20px;line-height:20px;color:#bbbbbb;font-size:12px;letter-spacing:-0.049px;">ritm_opened</div>
<div class="a t" style="left:2284.717px;top:415px;height:20px;line-height:20px;color:#7f8284;font-size:11px;letter-spacing:-0.029px;">varchar(255)</div>
<svg class="a" style="left:2187px;top:437px;" width="16" height="16" viewBox="0 0 16 16"><rect x="0.8" y="1" width="5" height="12" fill="#9aa4ab"/><rect x="7" y="1" width="8" height="12" fill="#9aa4ab"/><g fill="#3c3f41"><rect x="8.2" y="5" width="2.6" height="1.8"/><rect x="11.6" y="5" width="2.6" height="1.8"/><rect x="8.2" y="8" width="2.6" height="1.8"/><rect x="11.6" y="8" width="2.6" height="1.8"/><rect x="8.2" y="11" width="2.6" height="1.8"/><rect x="11.6" y="11" width="2.6" height="1.8"/></g></svg>
<div class="a t" style="left:2209px;top:435px;height:20px;line-height:20px;color:#bbbbbb;font-size:12px;letter-spacing:-0.175px;">ritm_status</div>
<div class="a t" style="left:2275.425px;top:435px;height:20px;line-height:20px;color:#7f8284;font-size:11px;letter-spacing:0.688px;">int</div>
<svg class="a" style="left:2187px;top:457px;" width="16" height="16" viewBox="0 0 16 16"><rect x="0.8" y="1" width="5" height="12" fill="#9aa4ab"/><rect x="7" y="1" width="8" height="12" fill="#9aa4ab"/><g fill="#3c3f41"><rect x="8.2" y="5" width="2.6" height="1.8"/><rect x="11.6" y="5" width="2.6" height="1.8"/><rect x="8.2" y="8" width="2.6" height="1.8"/><rect x="11.6" y="8" width="2.6" height="1.8"/><rect x="8.2" y="11" width="2.6" height="1.8"/><rect x="11.6" y="11" width="2.6" height="1.8"/></g></svg>
<div class="a t" style="left:2209px;top:455px;height:20px;line-height:20px;color:#bbbbbb;font-size:12px;letter-spacing:-0.007px;">ritm_item</div>
<div class="a t" style="left:2267.789px;top:455px;height:20px;line-height:20px;color:#7f8284;font-size:11px;letter-spacing:-0.029px;">varchar(255)</div>
<svg class="a" style="left:2187px;top:477px;" width="16" height="16" viewBox="0 0 16 16"><rect x="0.8" y="1" width="5" height="12" fill="#9aa4ab"/><rect x="7" y="1" width="8" height="12" fill="#9aa4ab"/><g fill="#3c3f41"><rect x="8.2" y="5" width="2.6" height="1.8"/><rect x="11.6" y="5" width="2.6" height="1.8"/><rect x="8.2" y="8" width="2.6" height="1.8"/><rect x="11.6" y="8" width="2.6" height="1.8"/><rect x="8.2" y="11" width="2.6" height="1.8"/><rect x="11.6" y="11" width="2.6" height="1.8"/></g></svg>
<div class="a t" style="left:2209px;top:475px;height:20px;line-height:20px;color:#bbbbbb;font-size:12px;letter-spacing:-0.101px;">ritm_short_description</div>
<div class="a t" style="left:2334.42px;top:475px;height:20px;line-height:20px;color:#7f8284;font-size:11px;letter-spacing:0.427px;">text</div>
<svg class="a" style="left:2187px;top:497px;" width="16" height="16" viewBox="0 0 16 16"><rect x="0.8" y="1" width="5" height="12" fill="#9aa4ab"/><rect x="7" y="1" width="8" height="12" fill="#9aa4ab"/><g fill="#3c3f41"><rect x="8.2" y="5" width="2.6" height="1.8"/><rect x="11.6" y="5" width="2.6" height="1.8"/><rect x="8.2" y="8" width="2.6" height="1.8"/><rect x="11.6" y="8" width="2.6" height="1.8"/><rect x="8.2" y="11" width="2.6" height="1.8"/><rect x="11.6" y="11" width="2.6" height="1.8"/></g></svg>
<div class="a t" style="left:2209px;top:495px;height:20px;line-height:20px;color:#bbbbbb;font-size:12px;letter-spacing:-0.204px;">ritm_work_notes</div>
<div class="a t" style="left:2303.6805px;top:495px;height:20px;line-height:20px;color:#7f8284;font-size:11px;letter-spacing:0.333px;">longtext = &#x27;[]&#x27;</div>
<svg class="a" style="left:2187px;top:517px;" width="16" height="16" viewBox="0 0 16 16"><rect x="0.8" y="1" width="5" height="12" fill="#9aa4ab"/><rect x="7" y="1" width="8" height="12" fill="#9aa4ab"/><g fill="#3c3f41"><rect x="8.2" y="5" width="2.6" height="1.8"/><rect x="11.6" y="5" width="2.6" height="1.8"/><rect x="8.2" y="8" width="2.6" height="1.8"/><rect x="11.6" y="8" width="2.6" height="1.8"/><rect x="8.2" y="11" width="2.6" height="1.8"/><rect x="11.6" y="11" width="2.6" height="1.8"/></g></svg>
<div class="a t" style="left:2209px;top:515px;height:20px;line-height:20px;color:#bbbbbb;font-size:12px;letter-spacing:-0.098px;">ritm_activities</div>
<div class="a t" style="left:2289.8115px;top:515px;height:20px;line-height:20px;color:#7f8284;font-size:11px;letter-spacing:0.333px;">longtext = &#x27;[]&#x27;</div>
<svg class="a" style="left:2187px;top:537px;" width="16" height="16" viewBox="0 0 16 16"><rect x="0.8" y="1" width="5" height="12" fill="#9aa4ab"/><rect x="7" y="1" width="8" height="12" fill="#9aa4ab"/><g fill="#3c3f41"><rect x="8.2" y="5" width="2.6" height="1.8"/><rect x="11.6" y="5" width="2.6" height="1.8"/><rect x="8.2" y="8" width="2.6" height="1.8"/><rect x="11.6" y="8" width="2.6" height="1.8"/><rect x="8.2" y="11" width="2.6" height="1.8"/><rect x="11.6" y="11" width="2.6" height="1.8"/></g></svg>
<div class="a t" style="left:2209px;top:535px;height:20px;line-height:20px;color:#bbbbbb;font-size:12px;letter-spacing:-0.188px;">ritm_variables</div>
<div class="a t" style="left:2290.7545px;top:535px;height:20px;line-height:20px;color:#7f8284;font-size:11px;letter-spacing:0.333px;">longtext = &#x27;[]&#x27;</div>
<svg class="a" style="left:2187px;top:557px;" width="16" height="16" viewBox="0 0 16 16"><rect x="0.8" y="1" width="5" height="12" fill="#9aa4ab"/><rect x="7" y="1" width="8" height="12" fill="#9aa4ab"/><g fill="#3c3f41"><rect x="8.2" y="5" width="2.6" height="1.8"/><rect x="11.6" y="5" width="2.6" height="1.8"/><rect x="8.2" y="8" width="2.6" height="1.8"/><rect x="11.6" y="8" width="2.6" height="1.8"/><rect x="8.2" y="11" width="2.6" height="1.8"/><rect x="11.6" y="11" width="2.6" height="1.8"/></g></svg>
<div class="a t" style="left:2209px;top:555px;height:20px;line-height:20px;color:#bbbbbb;font-size:12px;letter-spacing:-0.286px;">ritm_tasks</div>
<div class="a t" style="left:2270.595px;top:555px;height:20px;line-height:20px;color:#7f8284;font-size:11px;letter-spacing:0.333px;">longtext = &#x27;[]&#x27;</div>
<svg class="a" style="left:2152px;top:579px;" width="10" height="10" viewBox="0 0 10 10"><path d="M3 0.8 L7.3 5 L3 9.2" fill="none" stroke="#9a9da0" stroke-width="1.2"/></svg>
<svg class="a" style="left:2169px;top:575px;" width="16" height="16" viewBox="0 0 16 16"><path d="M1 3 H6 L7.5 5 H15 V14 H1 Z" fill="#3f86a5"/></svg>
<div class="a t" style="left:2191px;top:575px;height:20px;line-height:20px;color:#bbbbbb;font-size:12px;letter-spacing:-0.534px;">keys</div>
<div class="a t" style="left:2220.569px;top:575px;height:20px;line-height:20px;color:#7f8284;font-size:11px;">1</div>
<svg class="a" style="left:2152px;top:599px;" width="10" height="10" viewBox="0 0 10 10"><path d="M3 0.8 L7.3 5 L3 9.2" fill="none" stroke="#9a9da0" stroke-width="1.2"/></svg>
<svg class="a" style="left:2169px;top:595px;" width="16" height="16" viewBox="0 0 16 16"><path d="M1 3 H6 L7.5 5 H15 V14 H1 Z" fill="#3f86a5"/></svg>
<div class="a t" style="left:2191px;top:595px;height:20px;line-height:20px;color:#bbbbbb;font-size:12px;letter-spacing:-0.244px;">indexes</div>
<div class="a t" style="left:2237.3935px;top:595px;height:20px;line-height:20px;color:#7f8284;font-size:11px;">1</div>
<div class="a" style="left:2073px;top:614px;width:466px;height:20px;background:#0d293e;"></div>
<svg class="a" style="left:2134px;top:619px;" width="10" height="10" viewBox="0 0 10 10"><path d="M0.8 2.2 L5 6.5 L9.2 2.2" fill="none" stroke="#9a9da0" stroke-width="1.2"/></svg>
<svg class="a" style="left:2151px;top:616px;" width="16" height="16" viewBox="0 0 16 16"><rect x="1" y="2" width="14" height="12" fill="#a9b0b5"/><g fill="#3c3f41"><rect x="2.2" y="5.5" width="3.2" height="2"/><rect x="6.4" y="5.5" width="3.2" height="2"/><rect x="10.6" y="5.5" width="3.2" height="2"/><rect x="2.2" y="8.5" width="3.2" height="2"/><rect x="6.4" y="8.5" width="3.2" height="2"/><rect x="10.6" y="8.5" width="3.2" height="2"/><rect x="2.2" y="11.5" width="3.2" height="2"/><rect x="6.4" y="11.5" width="3.2" height="2"/><rect x="10.6" y="11.5" width="3.2" height="2"/></g></svg>
<div class="a t" style="left:2173px;top:615px;height:20px;line-height:20px;color:#bbbbbb;font-size:12px;letter-spacing:-0.299px;">request_states</div>
<svg class="a" style="left:2152px;top:639px;" width="10" height="10" viewBox="0 0 10 10"><path d="M0.8 2.2 L5 6.5 L9.2 2.2" fill="none" stroke="#9a9da0" stroke-width="1.2"/></svg>
<svg class="a" style="left:2169px;top:635px;" width="16" height="16" viewBox="0 0 16 16"><path d="M1 3 H6 L7.5 5 H15 V14 H1 Z" fill="#3f86a5"/></svg>
<div class="a t" style="left:2191px;top:635px;height:20px;line-height:20px;color:#bbbbbb;font-size:12px;letter-spacing:-0.092px;">columns</div>
<div class="a t" style="left:2241.637px;top:635px;height:20px;line-height:20px;color:#7f8284;font-size:11px;">2</div>
<svg class="a" style="left:2187px;top:657px;" width="17" height="16" viewBox="0 0 17 16"><rect x="0.8" y="1" width="5" height="9" fill="#3d8fb5"/><circle cx="3.2" cy="12.2" r="2.6" fill="#9aa4ab"/><rect x="7" y="1" width="8" height="2" fill="#9aa4ab"/><path d="M7 5.5 H10 M7 8.5 H9.5 M7 11.5 H9.5" stroke="#9aa4ab" stroke-width="1.4"/><circle cx="12.5" cy="6.2" r="2.4" fill="none" stroke="#e8a83a" stroke-width="1.8"/><path d="M12.5 8.5 V15 M12.5 12 H15 M12.5 14.5 H14.5" stroke="#e8a83a" stroke-width="1.8"/></svg>
<div class="a t" style="left:2209px;top:655px;height:20px;line-height:20px;color:#bbbbbb;font-size:12px;letter-spacing:-0.282px;">state_id</div>
<div class="a t" style="left:2258.543px;top:655px;height:20px;line-height:20px;color:#7f8284;font-size:11px;letter-spacing:0.219px;">int (auto increment)</div>
<svg class="a" style="left:2187px;top:677px;" width="16" height="16" viewBox="0 0 16 16"><rect x="0.8" y="1" width="5" height="12" fill="#9aa4ab"/><rect x="7" y="1" width="8" height="12" fill="#9aa4ab"/><g fill="#3c3f41"><rect x="8.2" y="5" width="2.6" height="1.8"/><rect x="11.6" y="5" width="2.6" height="1.8"/><rect x="8.2" y="8" width="2.6" height="1.8"/><rect x="11.6" y="8" width="2.6" height="1.8"/><rect x="8.2" y="11" width="2.6" height="1.8"/><rect x="11.6" y="11" width="2.6" height="1.8"/></g></svg>
<div class="a t" style="left:2209px;top:675px;height:20px;line-height:20px;color:#bbbbbb;font-size:12px;letter-spacing:-0.268px;">state_label</div>
<div class="a t" style="left:2273.8495px;top:675px;height:20px;line-height:20px;color:#7f8284;font-size:11px;letter-spacing:-0.029px;">varchar(255)</div>
<svg class="a" style="left:2152px;top:699px;" width="10" height="10" viewBox="0 0 10 10"><path d="M3 0.8 L7.3 5 L3 9.2" fill="none" stroke="#9a9da0" stroke-width="1.2"/></svg>
<svg class="a" style="left:2169px;top:695px;" width="16" height="16" viewBox="0 0 16 16"><path d="M1 3 H6 L7.5 5 H15 V14 H1 Z" fill="#3f86a5"/></svg>
<div class="a t" style="left:2191px;top:695px;height:20px;line-height:20px;color:#bbbbbb;font-size:12px;letter-spacing:-0.534px;">keys</div>
<div class="a t" style="left:2220.569px;top:695px;height:20px;line-height:20px;color:#7f8284;font-size:11px;">1</div>
<svg class="a" style="left:2152px;top:719px;" width="10" height="10" viewBox="0 0 10 10"><path d="M3 0.8 L7.3 5 L3 9.2" fill="none" stroke="#9a9da0" stroke-width="1.2"/></svg>
<svg class="a" style="left:2169px;top:715px;" width="16" height="16" viewBox="0 0 16 16"><path d="M1 3 H6 L7.5 5 H15 V14 H1 Z" fill="#3f86a5"/></svg>
<div class="a t" style="left:2191px;top:715px;height:20px;line-height:20px;color:#bbbbbb;font-size:12px;letter-spacing:-0.244px;">indexes</div>
<div class="a t" style="left:2237.3935px;top:715px;height:20px;line-height:20px;color:#7f8284;font-size:11px;">1</div>
<svg class="a" style="left:2134px;top:739px;" width="10" height="10" viewBox="0 0 10 10"><path d="M3 0.8 L7.3 5 L3 9.2" fill="none" stroke="#9a9da0" stroke-width="1.2"/></svg>
<svg class="a" style="left:2151px;top:736px;" width="16" height="16" viewBox="0 0 16 16"><rect x="1" y="2" width="14" height="12" fill="#a9b0b5"/><g fill="#3c3f41"><rect x="2.2" y="5.5" width="3.2" height="2"/><rect x="6.4" y="5.5" width="3.2" height="2"/><rect x="10.6" y="5.5" width="3.2" height="2"/><rect x="2.2" y="8.5" width="3.2" height="2"/><rect x="6.4" y="8.5" width="3.2" height="2"/><rect x="10.6" y="8.5" width="3.2" height="2"/><rect x="2.2" y="11.5" width="3.2" height="2"/><rect x="6.4" y="11.5" width="3.2" height="2"/><rect x="10.6" y="11.5" width="3.2" height="2"/></g></svg>
<div class="a t" style="left:2173px;top:735px;height:20px;line-height:20px;color:#bbbbbb;font-size:12px;letter-spacing:-0.194px;">requests</div>
<svg class="a" style="left:2134px;top:759px;" width="10" height="10" viewBox="0 0 10 10"><path d="M3 0.8 L7.3 5 L3 9.2" fill="none" stroke="#9a9da0" stroke-width="1.2"/></svg>
<svg class="a" style="left:2151px;top:756px;" width="16" height="16" viewBox="0 0 16 16"><rect x="1" y="2" width="14" height="12" fill="#a9b0b5"/><g fill="#3c3f41"><rect x="2.2" y="5.5" width="3.2" height="2"/><rect x="6.4" y="5.5" width="3.2" height="2"/><rect x="10.6" y="5.5" width="3.2" height="2"/><rect x="2.2" y="8.5" width="3.2" height="2"/><rect x="6.4" y="8.5" width="3.2" height="2"/><rect x="10.6" y="8.5" width="3.2" height="2"/><rect x="2.2" y="11.5" width="3.2" height="2"/><rect x="6.4" y="11.5" width="3.2" height="2"/><rect x="10.6" y="11.5" width="3.2" height="2"/></g></svg>
<div class="a t" style="left:2173px;top:755px;height:20px;line-height:20px;color:#bbbbbb;font-size:12px;letter-spacing:-0.445px;">tasks</div>
<svg class="a" style="left:2134px;top:779px;" width="10" height="10" viewBox="0 0 10 10"><path d="M3 0.8 L7.3 5 L3 9.2" fill="none" stroke="#9a9da0" stroke-width="1.2"/></svg>
<svg class="a" style="left:2151px;top:776px;" width="16" height="16" viewBox="0 0 16 16"><rect x="1" y="2" width="14" height="12" fill="#a9b0b5"/><g fill="#3c3f41"><rect x="2.2" y="5.5" width="3.2" height="2"/><rect x="6.4" y="5.5" width="3.2" height="2"/><rect x="10.6" y="5.5" width="3.2" height="2"/><rect x="2.2" y="8.5" width="3.2" height="2"/><rect x="6.4" y="8.5" width="3.2" height="2"/><rect x="10.6" y="8.5" width="3.2" height="2"/><rect x="2.2" y="11.5" width="3.2" height="2"/><rect x="6.4" y="11.5" width="3.2" height="2"/><rect x="10.6" y="11.5" width="3.2" height="2"/></g></svg>
<div class="a t" style="left:2173px;top:775px;height:20px;line-height:20px;color:#bbbbbb;font-size:12px;letter-spacing:-0.505px;">users</div>
<svg class="a" style="left:2134px;top:799px;" width="10" height="10" viewBox="0 0 10 10"><path d="M3 0.8 L7.3 5 L3 9.2" fill="none" stroke="#9a9da0" stroke-width="1.2"/></svg>
<svg class="a" style="left:2151px;top:796px;" width="16" height="16" viewBox="0 0 16 16"><rect x="1" y="2" width="14" height="12" fill="#a9b0b5"/><g fill="#3c3f41"><rect x="2.2" y="5.5" width="3.2" height="2"/><rect x="6.4" y="5.5" width="3.2" height="2"/><rect x="10.6" y="5.5" width="3.2" height="2"/><rect x="2.2" y="8.5" width="3.2" height="2"/><rect x="6.4" y="8.5" width="3.2" height="2"/><rect x="10.6" y="8.5" width="3.2" height="2"/><rect x="2.2" y="11.5" width="3.2" height="2"/><rect x="6.4" y="11.5" width="3.2" height="2"/><rect x="10.6" y="11.5" width="3.2" height="2"/></g></svg>
<div class="a t" style="left:2173px;top:795px;height:20px;line-height:20px;color:#bbbbbb;font-size:12px;letter-spacing:-0.095px;">warnings</div>
<svg class="a" style="left:2098px;top:819px;" width="10" height="10" viewBox="0 0 10 10"><path d="M3 0.8 L7.3 5 L3 9.2" fill="none" stroke="#9a9da0" stroke-width="1.2"/></svg>
<svg class="a" style="left:2115px;top:816px;" width="17" height="17" viewBox="0 0 17 17"><path d="M0 2 H6 L7 4 H13 V14 H0 Z" fill="#9aa0a5"/><rect x="7" y="8" width="10" height="9" fill="#3c3f41"/><path d="M8 9.5 H16 M8 12 H16 M8 14.5 H16" stroke="#3592c4" stroke-width="1.3"/></svg>
<div class="a t" style="left:2137px;top:815px;height:20px;line-height:20px;color:#bbbbbb;font-size:12px;letter-spacing:-0.299px;">Server Objects</div>
<div class="a" style="left:2538px;top:58px;width:1px;height:1299px;background:#2b2b2b;"></div>
<div class="a" style="left:2539px;top:58px;width:22px;height:1299px;background:#3c3f41;"></div>
<div class="a" style="left:2539px;top:58px;width:22px;height:85px;background:#2d2f30;"></div>
<svg class="a" style="left:2543px;top:67px;" width="14" height="15" viewBox="0 0 14 15"><ellipse cx="7" cy="3" rx="6" ry="2.2" fill="#c9cbcd"/><path d="M1 5 Q7 8 13 5 V7.5 Q7 10.5 1 7.5 Z M1 9.5 Q7 12.5 13 9.5 V12 Q7 15 1 12 Z" fill="#c9cbcd"/></svg>
<div class="a t" style="left:2557px;top:85.0px;width:51.0px;height:16px;line-height:16px;color:#e6e6e6;font-size:11px;transform-origin:0 0;transform:rotate(90deg);letter-spacing:0.054px">Database</div>
<svg class="a" style="left:2543px;top:155px;" width="14" height="14" viewBox="0 0 14 14"><path d="M7 1 Q11 1 11 6 V10 L13 12 H1 L3 10 V6 Q3 1 7 1 Z" fill="#afb1b3"/><circle cx="7" cy="13" r="1.5" fill="#afb1b3"/></svg>
<div class="a t" style="left:2557px;top:172.5px;width:63.5px;height:16px;line-height:16px;color:#bbbbbb;font-size:11px;transform-origin:0 0;transform:rotate(90deg);letter-spacing:0.005px">Notifications</div>
<div class="a" style="left:0px;top:1357px;width:2561px;height:1px;background:#2b2b2b;"></div>
<div class="a" style="left:0px;top:1358px;width:2561px;height:21px;background:#3c3f41;"></div>
<div class="a" style="left:0px;top:1379px;width:2561px;height:1px;background:#4b4d4f;"></div>
<svg class="a" style="left:31px;top:1362px;" width="12" height="14" viewBox="0 0 12 14"><path d="M3 1 V13 M3 9 Q9 9 9 3" fill="none" stroke="#afb1b3" stroke-width="1.6"/><circle cx="3" cy="2" r="1.8" fill="#afb1b3"/><circle cx="9" cy="2.5" r="1.8" fill="#afb1b3"/><circle cx="3" cy="12.5" r="1.8" fill="#afb1b3"/></svg>
<div class="a t" style="left:47px;top:1360px;height:21px;line-height:21px;color:#bbbbbb;font-size:11.5px;letter-spacing:0.156px;">Git</div>
<svg class="a" style="left:82px;top:1363px;" width="12" height="12" viewBox="0 0 12 12"><path d="M0 2 H2 M4 2 H12 M0 6 H2 M4 6 H12 M0 10 H2 M4 10 H12" stroke="#afb1b3" stroke-width="1.6"/></svg>
<div class="a t" style="left:97px;top:1360px;height:21px;line-height:21px;color:#bbbbbb;font-size:11.5px;letter-spacing:-0.339px;">TODO</div>
<svg class="a" style="left:151px;top:1362px;" width="12" height="12" viewBox="0 0 12 12"><circle cx="6" cy="6" r="6" fill="#afb1b3"/><path d="M6 2.5 V7 M6 8.5 V10" stroke="#3c3f41" stroke-width="1.6"/></svg>
<div class="a t" style="left:167px;top:1360px;height:21px;line-height:21px;color:#bbbbbb;font-size:11.5px;letter-spacing:-0.366px;">Problems</div>
<svg class="a" style="left:235px;top:1363px;" width="12" height="12" viewBox="0 0 12 12"><rect x="0" y="0" width="12" height="11" fill="#afb1b3"/><path d="M2 3 L5 5.5 L2 8 M6 8.5 H10" fill="none" stroke="#3c3f41" stroke-width="1.3"/></svg>
<div class="a t" style="left:251px;top:1360px;height:21px;line-height:21px;color:#bbbbbb;font-size:11.5px;letter-spacing:0.221px;">Terminal</div>
<svg class="a" style="left:316px;top:1362px;" width="13" height="13" viewBox="0 0 13 13"><path d="M3.5 0.5 H9.5 L12.5 6.5 L9.5 12.5 H3.5 L0.5 6.5 Z" fill="#afb1b3"/><path d="M5 3.5 L9 6.5 L5 9.5 Z" fill="#3c3f41"/></svg>
<div class="a t" style="left:334px;top:1360px;height:21px;line-height:21px;color:#bbbbbb;font-size:11.5px;letter-spacing:-0.728px;">Services</div>
<svg class="a" style="left:397px;top:1362px;" width="13" height="14" viewBox="0 0 13 14"><ellipse cx="6" cy="2.5" rx="5.5" ry="2" fill="#afb1b3"/><path d="M0.5 4.5 Q6 7 11.5 4.5 V6.5 Q6 9 0.5 6.5 Z M0.5 8.5 Q4 10 6 10 V12 Q4 12 0.5 10.5 Z" fill="#afb1b3"/><path d="M6 10 L8.5 12.5 L12.5 8" fill="none" stroke="#afb1b3" stroke-width="1.5"/></svg>
<div class="a t" style="left:414px;top:1360px;height:21px;line-height:21px;color:#bbbbbb;font-size:11.5px;letter-spacing:-0.227px;">Database Changes</div>
<svg class="a" style="left:534px;top:1362px;" width="13" height="13" viewBox="0 0 13 13"><circle cx="6.5" cy="6.5" r="5.5" fill="none" stroke="#8c8e90" stroke-width="1.3"/><path d="M6.5 1 V6.5 H12" fill="none" stroke="#8c8e90" stroke-width="1.3"/></svg>
<div class="a t" style="left:550px;top:1360px;height:21px;line-height:21px;color:#bbbbbb;font-size:11.5px;letter-spacing:-0.031px;">Statistic</div>
<div class="a" style="left:0px;top:1380px;width:2561px;height:20px;background:#3c3f41;"></div>
<svg class="a" style="left:4px;top:1383px;" width="13" height="13" viewBox="0 0 13 13"><rect x="3" y="0.5" width="9" height="9" fill="none" stroke="#afb1b3"/><path d="M0.5 3 V12.5 H10" fill="none" stroke="#afb1b3"/></svg>
<svg class="a" style="left:1966px;top:1382px;" width="18" height="16" viewBox="0 0 18 16"><path d="M4 12 A3.5 3.5 0 0 1 4 5 A5 5 0 0 1 13 4 A3.5 3.5 0 0 1 14 11 Z" fill="#afb1b3"/><circle cx="14" cy="12.5" r="3" fill="#3c3f41"/><circle cx="14" cy="12.5" r="2" fill="none" stroke="#afb1b3" stroke-width="1.2"/></svg>
<div class="a t" style="left:1993px;top:1381px;height:20px;line-height:20px;color:#bbbbbb;font-size:11.5px;letter-spacing:-0.286px;">PHP: 7.0</div>
<svg class="a" style="left:2048px;top:1382px;" width="15" height="16" viewBox="0 0 15 16"><path d="M5 1 H11 V9 H2 V4 Z" fill="#9aa0a5"/><rect x="0" y="9" width="15" height="7" fill="#4b8b2f"/><text x="7.5" y="15" font-size="6" font-family="Liberation Sans" font-weight="bold" fill="#9be36b" text-anchor="middle">FTP</text></svg>
<div class="a t" style="left:2066px;top:1381px;height:20px;line-height:20px;color:#bbbbbb;font-size:11.5px;letter-spacing:0.182px;">ftp.roerveen.nl</div>
<div class="a t" style="left:2154px;top:1381px;height:20px;line-height:20px;color:#bbbbbb;font-size:11.5px;letter-spacing:-0.100px;">53:6 (6 chars, 1 line break)</div>
<div class="a t" style="left:2301px;top:1381px;height:20px;line-height:20px;color:#bbbbbb;font-size:11.5px;letter-spacing:-1.349px;">CRLF</div>
<div class="a t" style="left:2340px;top:1381px;height:20px;line-height:20px;color:#bbbbbb;font-size:11.5px;letter-spacing:-0.648px;">UTF-8</div>
<div class="a t" style="left:2382px;top:1381px;height:20px;line-height:20px;color:#bbbbbb;font-size:11.5px;letter-spacing:-0.286px;">4 spaces</div>
<svg class="a" style="left:2439px;top:1383px;" width="11" height="15" viewBox="0 0 11 15"><path d="M2 1 V14 M2 10 Q9 10 9 2" fill="none" stroke="#afb1b3" stroke-width="1.5"/></svg>
<div class="a t" style="left:2455px;top:1381px;height:20px;line-height:20px;color:#bbbbbb;font-size:11.5px;letter-spacing:0.519px;">development</div>
<svg class="a" style="left:2535px;top:1383px;" width="13" height="13" viewBox="0 0 13 13"><rect x="3.5" y="5.5" width="8" height="6" fill="#afb1b3"/><path d="M1.5 5 V3.5 A3 3 0 0 1 7.5 3.5 V6" fill="none" stroke="#afb1b3" stroke-width="1.5"/></svg>
<div class="a" style="left:2560px;top:0px;width:1px;height:1400px;background:#000;"></div></body></html>
